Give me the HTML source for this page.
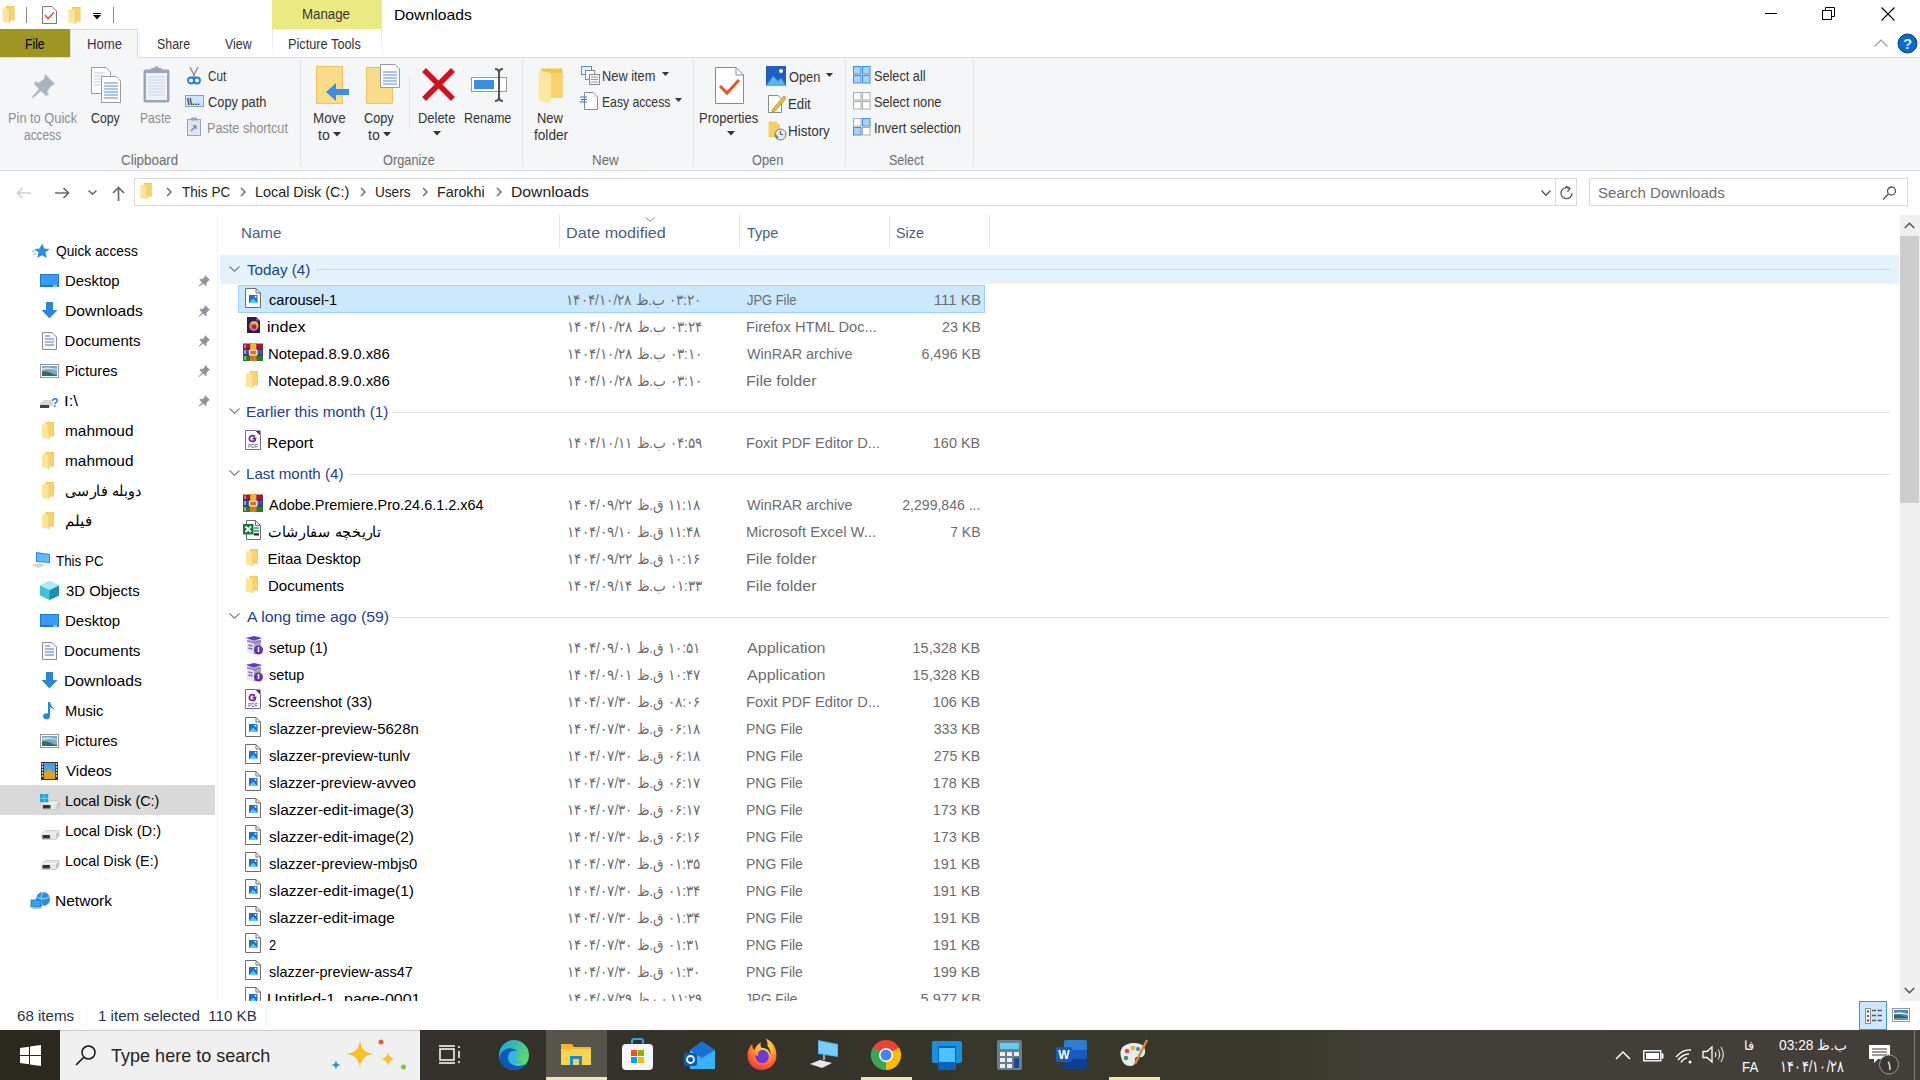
<!DOCTYPE html><html><head><meta charset="utf-8"><style>
html,body{margin:0;padding:0;width:1920px;height:1080px;overflow:hidden;background:#fff;}
body{position:relative;font-family:"Liberation Sans", sans-serif;}
.t{position:absolute;white-space:nowrap;}
.r{position:absolute;}
.s{position:absolute;overflow:visible;}
</style></head><body>
<svg class="s" style="left:2px;top:6px" width="13" height="17" viewBox="0 0 12 17"><path d="M3.5 0 H12 V14.5 H3.5 Z" fill="#eec14f"/><path d="M4 0.5 H11.5 V14 H4 Z" fill="#f7d36c"/><path d="M0 2 L7 3.2 V17 L0 15.6 Z" fill="#fde49a"/><path d="M7 3.2 V17" stroke="#f0c85c" stroke-width=".8"/></svg>
<div class="r" style="left:26px;top:7px;width:1px;height:16px;background:#8a8a8a;"></div>
<svg class="s" style="left:42px;top:6px" width="15" height="18" viewBox="0 0 15 18"><path d="M0.5 0.5 H10 L14.5 5 V17.5 H0.5 Z" fill="#f7f9fb" stroke="#7a7a7a"/><path d="M3 9 L6 12.5 L12 6.5" fill="none" stroke="#e0572a" stroke-width="1.6"/></svg>
<svg class="s" style="left:68px;top:7px" width="13" height="17" viewBox="0 0 12 17"><path d="M3.5 0 H12 V14.5 H3.5 Z" fill="#eec14f"/><path d="M4 0.5 H11.5 V14 H4 Z" fill="#f7d36c"/><path d="M0 2 L7 3.2 V17 L0 15.6 Z" fill="#fde49a"/><path d="M7 3.2 V17" stroke="#f0c85c" stroke-width=".8"/></svg>
<div class="r" style="left:93px;top:13px;width:8px;height:1.3px;background:#000;"></div>
<svg class="s" style="left:93px;top:15px" width="8" height="5" viewBox="0 0 8 5"><path d="M0 0 H8 L4 4.5 Z" fill="#000"/></svg>
<div class="r" style="left:113px;top:7px;width:1px;height:16px;background:#8a8a8a;"></div>
<div class="r" style="left:272px;top:0px;width:110px;height:29px;background:#eaea80;"></div>
<div class="t" id="ke1c3384535" style="left:302.25px;top:5.5px;font-size:14px;line-height:16px;color:#333;transform:scaleX(0.9460);transform-origin:left center;">Manage</div>
<div class="t" id="k9333cf0b65" style="left:394.45px;top:7.0px;font-size:15px;line-height:16px;color:#000;transform:scaleX(1.0493);transform-origin:left center;">Downloads</div>
<div class="r" style="left:1765px;top:13px;width:12px;height:1px;background:#000;"></div>
<svg class="s" style="left:1822px;top:7px" width="14" height="14" viewBox="0 0 14 14"><rect x="0.5" y="3.5" width="9" height="9" fill="none" stroke="#000"/><path d="M3.5 3.5 V0.5 H12.5 V9.5 H9.5" fill="none" stroke="#000"/></svg>
<svg class="s" style="left:1881px;top:7px" width="14" height="14" viewBox="0 0 14 14"><path d="M0.5 0.5 L13.5 13.5 M13.5 0.5 L0.5 13.5" stroke="#000" stroke-width="1.1"/></svg>
<div class="r" style="left:0px;top:29px;width:70px;height:28px;background:#9d9623;"></div>
<div class="t" id="k8fe68fe184" style="left:24.63px;top:35.5px;font-size:14px;line-height:16px;color:#000;transform:scaleX(0.8714);transform-origin:left center;">File</div>
<div class="r" style="left:70px;top:29px;width:68px;height:29px;background:#f5f6f7;border:1px solid #dadbdc;border-bottom:none;box-sizing:border-box;"></div>
<div class="t" id="k42819242b9" style="left:86.56px;top:35.5px;font-size:14px;line-height:16px;color:#333a4d;transform:scaleX(0.9417);transform-origin:left center;">Home</div>
<div class="t" id="k371e8a2ec9" style="left:156.51px;top:35.5px;font-size:14px;line-height:16px;color:#333;transform:scaleX(0.8861);transform-origin:left center;">Share</div>
<div class="t" id="kcfe4333309" style="left:225.3px;top:35.5px;font-size:14px;line-height:16px;color:#333;transform:scaleX(0.8833);transform-origin:left center;">View</div>
<div class="r" style="left:272px;top:29px;width:1px;height:28px;background:linear-gradient(#e0e0e0,#fff);"></div>
<div class="r" style="left:381px;top:29px;width:1px;height:28px;background:linear-gradient(#e0e0e0,#fff);"></div>
<div class="t" id="kbbd512cb06" style="left:288.49px;top:35.5px;font-size:14px;line-height:16px;color:#333;transform:scaleX(0.9113);transform-origin:left center;">Picture Tools</div>
<svg class="s" style="left:1874px;top:39px" width="14" height="8" viewBox="0 0 14 8"><path d="M0.5 7.5 L7 1 L13.5 7.5" fill="none" stroke="#9a9a9a" stroke-width="1.2"/></svg>
<svg class="s" style="left:1897px;top:33px" width="21" height="21" viewBox="0 0 21 21"><circle cx="10.5" cy="10.5" r="9.5" fill="#0b6acb" stroke="#093c7c" stroke-width="1"/><text x="10.5" y="16" font-size="15" font-weight="bold" fill="#c8f0ff" text-anchor="middle" font-family="Liberation Sans">?</text></svg>
<div class="r" style="left:0px;top:57px;width:1920px;height:114px;background:#f5f6f7;"></div>
<div class="r" style="left:0px;top:57px;width:70px;height:1px;background:#dadbdc;"></div>
<div class="r" style="left:138px;top:57px;width:1782px;height:1px;background:#dadbdc;"></div>
<div class="r" style="left:0px;top:170px;width:1920px;height:1px;background:#dadbdc;"></div>
<div class="r" style="left:300px;top:60px;width:1px;height:106px;background:#e2e3e4;"></div>
<div class="r" style="left:522px;top:60px;width:1px;height:106px;background:#e2e3e4;"></div>
<div class="r" style="left:693px;top:60px;width:1px;height:106px;background:#e2e3e4;"></div>
<div class="r" style="left:845px;top:60px;width:1px;height:106px;background:#e2e3e4;"></div>
<div class="r" style="left:973px;top:60px;width:1px;height:106px;background:#e2e3e4;"></div>
<div class="r" style="left:409px;top:75px;width:1px;height:54px;background:#e2e3e4;"></div>
<svg class="s" style="left:31px;top:72px" width="26" height="26" viewBox="0 0 13 13"><path d="M7 1 L12 6 L10 7 L8 10 L9 11 L7.5 12 L5 9.5 L1 13 L0.5 12.5 L4 8.5 L1.5 6 L2.5 4.5 L3.5 5.5 L6.5 3.5 Z" fill="#a9b4c3"/></svg>
<svg class="s" style="left:91px;top:67px" width="30" height="36" viewBox="0 0 30 36"><path d="M0.5 0.5 H15 L19.5 5 V26.5 H0.5 Z" fill="#fff" stroke="#9a9a9a"/><path d="M3 6 H14 M3 9 H16 M3 12 H16 M3 15 H16 M3 18 H16" stroke="#c5cfdc"/><path d="M10.5 9.5 H25 L29.5 14 V35.5 H10.5 Z" fill="#fff" stroke="#9a9a9a"/><path d="M13 16 H27 M13 19 H27 M13 22 H27 M13 25 H27 M13 28 H27 M13 31 H27" stroke="#4a8ed6"/></svg>
<svg class="s" style="left:143px;top:66px" width="27" height="37" viewBox="0 0 27 37"><rect x="0.5" y="3.5" width="26" height="33" rx="2" fill="#9aa5b8"/><rect x="3" y="7" width="21" height="27" fill="#eef1f6"/><path d="M5 11 H22 M5 14 H22 M5 17 H22 M5 20 H22 M5 23 H22 M5 26 H22 M5 29 H22" stroke="#d0d6e0"/><rect x="8" y="2" width="11" height="5" rx="1" fill="#9aa5b8"/><circle cx="13.5" cy="2" r="2" fill="#9aa5b8"/></svg>
<div class="t" id="kac4604ff54" style="left:8.49px;top:109.5px;font-size:14px;line-height:16px;color:#8d8d8d;transform:scaleX(0.9147);transform-origin:left center;">Pin to Quick</div>
<div class="t" id="k2690beb3b5" style="left:24.2px;top:126.5px;font-size:14px;line-height:16px;color:#8d8d8d;transform:scaleX(0.8523);transform-origin:left center;">access</div>
<div class="t" id="kb3a76b7572" style="left:91.0px;top:109.5px;font-size:14px;line-height:16px;color:#333;transform:scaleX(0.8788);transform-origin:left center;">Copy</div>
<div class="t" id="k5547e81e67" style="left:139.63px;top:109.5px;font-size:14px;line-height:16px;color:#8d8d8d;transform:scaleX(0.8676);transform-origin:left center;">Paste</div>
<svg class="s" style="left:187px;top:66px" width="14" height="19" viewBox="0 0 14 19"><path d="M3 1 L8 11 M11 1 L6 11" stroke="#8a8a8a" stroke-width="1.3"/><circle cx="4" cy="14.5" r="3" fill="none" stroke="#1a7fd4" stroke-width="1.8"/><circle cx="10" cy="14.5" r="3" fill="none" stroke="#1a7fd4" stroke-width="1.8"/></svg>
<div class="t" id="kb93fb93996" style="left:207.6px;top:67.5px;font-size:14px;line-height:16px;color:#333;transform:scaleX(0.8318);transform-origin:left center;">Cut</div>
<svg class="s" style="left:185px;top:95px" width="19" height="13" viewBox="0 0 19 13"><rect x="0.5" y="0.5" width="18" height="11" fill="#cde6fa" stroke="#6fa8dc"/><text x="2" y="9.5" font-size="9" font-weight="bold" fill="#222" font-family="Liberation Sans">\\...</text></svg>
<div class="t" id="k654f10a014" style="left:207.6px;top:93.5px;font-size:14px;line-height:16px;color:#333;transform:scaleX(0.9156);transform-origin:left center;">Copy path</div>
<svg class="s" style="left:187px;top:117px" width="15" height="19" viewBox="0 0 15 19"><rect x="0.5" y="2.5" width="13" height="16" fill="#dfe5ee" stroke="#9aa5b8"/><rect x="4" y="0.5" width="6" height="3" fill="#9aa5b8"/><path d="M4 14 L9 9 M6 9 H9 V12" stroke="#6a90c0" stroke-width="1.4" fill="none"/></svg>
<div class="t" id="kee9a45eb71" style="left:206.7px;top:119.5px;font-size:14px;line-height:16px;color:#8d8d8d;transform:scaleX(0.9044);transform-origin:left center;">Paste shortcut</div>
<div class="t" id="k705d8341e9" style="left:121.4px;top:151.5px;font-size:14px;line-height:16px;color:#6d6d6d;transform:scaleX(0.9550);transform-origin:left center;">Clipboard</div>
<svg class="s" style="left:316px;top:66px" width="34" height="38" viewBox="0 0 34 38"><path d="M0.5 0.5 H26.5 V37.5 H0.5 Z" fill="#f9dc8a" stroke="#e8c35e"/><path d="M33 23 H20 V17 L10 26 L20 35 V29 H33 Z" fill="#3c8fe0"/></svg>
<svg class="s" style="left:366px;top:64px" width="35" height="40" viewBox="0 0 35 40"><path d="M0.5 3.5 H26.5 V39.5 H0.5 Z" fill="#f9dc8a" stroke="#e8c35e"/><path d="M14.5 0.5 H29 L33.5 5 V23.5 H14.5 Z" fill="#fff" stroke="#9a9a9a"/><path d="M17 8 H31 M17 11 H31 M17 14 H31 M17 17 H31 M17 20 H31" stroke="#4a8ed6"/></svg>
<div class="t" id="k88aaeec71c" style="left:312.55px;top:109.5px;font-size:14px;line-height:16px;color:#333;transform:scaleX(0.9545);transform-origin:left center;">Move</div>
<div class="t" id="kad62a74085" style="left:318px;top:126.5px;font-size:14px;line-height:16px;color:#333;">to</div>
<svg class="s" style="left:333px;top:132px" width="8" height="5" viewBox="0 0 8 5"><path d="M0 0 H8 L4 4.5 Z" fill="#333"/></svg>
<div class="t" id="k0a5f998114" style="left:364.0px;top:109.5px;font-size:14px;line-height:16px;color:#333;transform:scaleX(0.9091);transform-origin:left center;">Copy</div>
<div class="t" id="kc221117f5c" style="left:368px;top:126.5px;font-size:14px;line-height:16px;color:#333;">to</div>
<svg class="s" style="left:383px;top:132px" width="8" height="5" viewBox="0 0 8 5"><path d="M0 0 H8 L4 4.5 Z" fill="#333"/></svg>
<svg class="s" style="left:423px;top:69px" width="31" height="31" viewBox="0 0 31 31"><path d="M3 3 L28 28 M28 3 L3 28" stroke="#d4101e" stroke-width="5.5" stroke-linecap="square"/></svg>
<div class="t" id="k14ca329ab1" style="left:418.08px;top:109.5px;font-size:14px;line-height:16px;color:#333;transform:scaleX(0.9231);transform-origin:left center;">Delete</div>
<svg class="s" style="left:433px;top:131px" width="8" height="5" viewBox="0 0 8 5"><path d="M0 0 H8 L4 4.5 Z" fill="#333"/></svg>
<svg class="s" style="left:471px;top:68px" width="37" height="34" viewBox="0 0 37 34"><rect x="0.5" y="9.5" width="35" height="14" fill="#fff" stroke="#9a9a9a"/><rect x="3" y="12" width="20" height="9" fill="#3b8fe3"/><path d="M24 1 Q28 1 28 5 V29 Q28 33 24 33 M32 1 Q28 1 28 5 M32 33 Q28 33 28 29" fill="none" stroke="#555" stroke-width="2"/></svg>
<div class="t" id="kce5debf62d" style="left:464.11px;top:109.5px;font-size:14px;line-height:16px;color:#333;transform:scaleX(0.8942);transform-origin:left center;">Rename</div>
<div class="t" id="k42b899a368" style="left:383.0px;top:151.5px;font-size:14px;line-height:16px;color:#6d6d6d;transform:scaleX(0.9123);transform-origin:left center;">Organize</div>
<svg class="s" style="left:538px;top:68px" width="25" height="36" viewBox="0 0 25 36"><path d="M3 0.5 H24.5 V30 H3 Z" fill="#f0c44c"/><path d="M0.5 2 L13 5 V35.5 L0.5 32.5 Z" fill="#fde7a2"/><path d="M13 5 H24.5 V30 H13 Z" fill="#f8d26a"/></svg>
<div class="t" id="k4eea5013cf" style="left:537.07px;top:109.5px;font-size:14px;line-height:16px;color:#333;transform:scaleX(0.9259);transform-origin:left center;">New</div>
<div class="t" id="k9134a0222e" style="left:533.8px;top:126.5px;font-size:14px;line-height:16px;color:#333;transform:scaleX(0.9722);transform-origin:left center;">folder</div>
<svg class="s" style="left:581px;top:66px" width="19" height="19" viewBox="0 0 19 19"><rect x="0.5" y="0.5" width="10" height="8" fill="#e8f2fb" stroke="#5a8fc8"/><rect x="4.5" y="4.5" width="9" height="9" fill="#fff" stroke="#8a8a8a"/><rect x="8.5" y="8.5" width="10" height="10" fill="#f4f4f8" stroke="#8a8a8a"/><path d="M10 11 H17 M10 13.5 H17 M10 16 H17" stroke="#b08ab8"/></svg>
<div class="t" id="k0bdb036ecd" style="left:602.08px;top:67.5px;font-size:14px;line-height:16px;color:#333;transform:scaleX(0.9153);transform-origin:left center;">New item</div>
<svg class="s" style="left:662px;top:72px" width="7" height="4" viewBox="0 0 7 4"><path d="M0 0 H7 L3.5 4 Z" fill="#333"/></svg>
<svg class="s" style="left:580px;top:92px" width="18" height="18" viewBox="0 0 18 18"><path d="M4.5 0.5 H13 L17.5 5 V17.5 H4.5 Z" fill="#fff" stroke="#8a8a8a"/><path d="M0 5 H7 M1 7.5 H7 M0 10 H7" stroke="#2a6fc0" stroke-width="1.2"/></svg>
<div class="t" id="k48c3096248" style="left:602.13px;top:93.5px;font-size:14px;line-height:16px;color:#333;transform:scaleX(0.8692);transform-origin:left center;">Easy access</div>
<svg class="s" style="left:675px;top:98px" width="7" height="4" viewBox="0 0 7 4"><path d="M0 0 H7 L3.5 4 Z" fill="#333"/></svg>
<div class="t" id="k6ccdc2c01c" style="left:592.04px;top:151.5px;font-size:14px;line-height:16px;color:#6d6d6d;transform:scaleX(0.9556);transform-origin:left center;">New</div>
<svg class="s" style="left:715px;top:67px" width="29" height="37" viewBox="0 0 29 37"><path d="M0.5 0.5 H21 L28.5 8 V36.5 H0.5 Z" fill="#fff" stroke="#8a8a8a"/><path d="M21 0.5 V8 H28.5" fill="none" stroke="#8a8a8a"/><path d="M5 19 L12 26 L24 13" fill="none" stroke="#e0572a" stroke-width="3"/></svg>
<div class="t" id="ke5a9089d20" style="left:699.07px;top:109.5px;font-size:14px;line-height:16px;color:#333;transform:scaleX(0.9281);transform-origin:left center;">Properties</div>
<svg class="s" style="left:727px;top:131px" width="8" height="5" viewBox="0 0 8 5"><path d="M0 0 H8 L4 4.5 Z" fill="#333"/></svg>
<svg class="s" style="left:766px;top:66px" width="20" height="20" viewBox="0 0 20 20"><rect x="0" y="0" width="20" height="20" fill="#1f5fbf"/><path d="M0 20 L7 10 L12 15 L15 12 L20 20 Z" fill="#54b4f0"/><circle cx="15" cy="5" r="2" fill="#fff"/></svg>
<div class="t" id="k4c3152ed04" style="left:789.0px;top:68.5px;font-size:14px;line-height:16px;color:#333;transform:scaleX(0.9118);transform-origin:left center;">Open</div>
<svg class="s" style="left:826px;top:73px" width="7" height="4" viewBox="0 0 7 4"><path d="M0 0 H7 L3.5 4 Z" fill="#333"/></svg>
<svg class="s" style="left:768px;top:93px" width="18" height="20" viewBox="0 0 18 20"><path d="M0.5 2.5 H10 L13.5 6 V19.5 H0.5 Z" fill="#fff" stroke="#8a8a8a"/><path d="M5 16 L16 3 L18 5 L7 18 L4 19 Z" fill="#f2c12e" stroke="#a07810" stroke-width=".7"/></svg>
<div class="t" id="kb9295ed554" style="left:788.06px;top:95.5px;font-size:14px;line-height:16px;color:#333;transform:scaleX(0.9435);transform-origin:left center;">Edit</div>
<svg class="s" style="left:768px;top:121px" width="19" height="20" viewBox="0 0 19 20"><path d="M0.5 0.5 H8 L10 3 H12 V16 H0.5 Z" fill="#f6cf62"/><circle cx="12.5" cy="13.5" r="5.5" fill="#e8e8e8" stroke="#777"/><path d="M12.5 10 V13.5 H15" stroke="#555" fill="none"/><path d="M7 14 L10 17" stroke="#2aa84a" stroke-width="2"/></svg>
<div class="t" id="k70b6361f41" style="left:788.04px;top:122.5px;font-size:14px;line-height:16px;color:#333;transform:scaleX(0.9605);transform-origin:left center;">History</div>
<div class="t" id="ke07621fb69" style="left:751.6px;top:151.5px;font-size:14px;line-height:16px;color:#6d6d6d;transform:scaleX(0.9118);transform-origin:left center;">Open</div>
<svg class="s" style="left:853px;top:66px" width="18" height="18" viewBox="0 0 18 18"><rect x="0.5" y="0.5" width="7.5" height="7.5" fill="#a9d2f5" stroke="#3c8fe0"/><rect x="9.5" y="0.5" width="7.5" height="7.5" fill="#a9d2f5" stroke="#3c8fe0"/><rect x="0.5" y="9.5" width="7.5" height="7.5" fill="#a9d2f5" stroke="#3c8fe0"/><rect x="9.5" y="9.5" width="7.5" height="7.5" fill="#a9d2f5" stroke="#3c8fe0"/></svg>
<div class="t" id="kdd23c667a3" style="left:874.09px;top:67.5px;font-size:14px;line-height:16px;color:#333;transform:scaleX(0.9071);transform-origin:left center;">Select all</div>
<svg class="s" style="left:853px;top:92px" width="18" height="18" viewBox="0 0 18 18"><rect x="0.5" y="0.5" width="7.5" height="7.5" fill="#fff" stroke="#aaa"/><rect x="9.5" y="0.5" width="7.5" height="7.5" fill="#fff" stroke="#aaa"/><rect x="0.5" y="9.5" width="7.5" height="7.5" fill="#fff" stroke="#aaa"/><rect x="9.5" y="9.5" width="7.5" height="7.5" fill="#fff" stroke="#aaa"/></svg>
<div class="t" id="k11d95b1da8" style="left:874.09px;top:93.5px;font-size:14px;line-height:16px;color:#333;transform:scaleX(0.9110);transform-origin:left center;">Select none</div>
<svg class="s" style="left:853px;top:118px" width="18" height="18" viewBox="0 0 18 18"><rect x="0.5" y="0.5" width="7.5" height="7.5" fill="#fff" stroke="#aaa"/><rect x="9.5" y="0.5" width="7.5" height="7.5" fill="#a9d2f5" stroke="#3c8fe0"/><rect x="0.5" y="9.5" width="7.5" height="7.5" fill="#a9d2f5" stroke="#3c8fe0"/><rect x="9.5" y="9.5" width="7.5" height="7.5" fill="#fff" stroke="#aaa"/></svg>
<div class="t" id="k8aea4aa72b" style="left:874.08px;top:119.5px;font-size:14px;line-height:16px;color:#333;transform:scaleX(0.9234);transform-origin:left center;">Invert selection</div>
<div class="t" id="kb5f30de877" style="left:889.11px;top:151.5px;font-size:14px;line-height:16px;color:#6d6d6d;transform:scaleX(0.8947);transform-origin:left center;">Select</div>
<svg class="s" style="left:16px;top:187px" width="16" height="12" viewBox="0 0 16 12"><path d="M15 6 H1.5 M6.5 1 L1.5 6 L6.5 11" fill="none" stroke="#d0d0d0" stroke-width="1.6"/></svg>
<svg class="s" style="left:54px;top:187px" width="16" height="12" viewBox="0 0 16 12"><path d="M1 6 H14.5 M9.5 1 L14.5 6 L9.5 11" fill="none" stroke="#6a6a6a" stroke-width="1.7"/></svg>
<svg class="s" style="left:88px;top:190px" width="9" height="5" viewBox="0 0 9 5"><path d="M0.5 0.5 L4.5 4.2 L8.5 0.5" fill="none" stroke="#6d6d6d" stroke-width="1.6"/></svg>
<svg class="s" style="left:112px;top:186px" width="13" height="15" viewBox="0 0 13 15"><path d="M6.5 15 V1.5 M1 7 L6.5 1.5 L12 7" fill="none" stroke="#6a6a6a" stroke-width="1.7"/></svg>
<div class="r" style="left:134px;top:178px;width:1443px;height:28px;background:#fff;border:1px solid #d9d9d9;box-sizing:border-box;"></div>
<div class="r" style="left:1555px;top:179px;width:1px;height:26px;background:#d9d9d9;"></div>
<svg class="s" style="left:140px;top:183px" width="12" height="16" viewBox="0 0 12 17"><path d="M3.5 0 H12 V14.5 H3.5 Z" fill="#eec14f"/><path d="M4 0.5 H11.5 V14 H4 Z" fill="#f7d36c"/><path d="M0 2 L7 3.2 V17 L0 15.6 Z" fill="#fde49a"/><path d="M7 3.2 V17" stroke="#f0c85c" stroke-width=".8"/></svg>
<svg class="s" style="left:166px;top:187px" width="6" height="10" viewBox="0 0 6 10"><path d="M1 1 L5 5 L1 9" fill="none" stroke="#6d6d6d" stroke-width="1.5"/></svg>
<svg class="s" style="left:240px;top:187px" width="6" height="10" viewBox="0 0 6 10"><path d="M1 1 L5 5 L1 9" fill="none" stroke="#6d6d6d" stroke-width="1.5"/></svg>
<svg class="s" style="left:360px;top:187px" width="6" height="10" viewBox="0 0 6 10"><path d="M1 1 L5 5 L1 9" fill="none" stroke="#6d6d6d" stroke-width="1.5"/></svg>
<svg class="s" style="left:422px;top:187px" width="6" height="10" viewBox="0 0 6 10"><path d="M1 1 L5 5 L1 9" fill="none" stroke="#6d6d6d" stroke-width="1.5"/></svg>
<svg class="s" style="left:496px;top:187px" width="6" height="10" viewBox="0 0 6 10"><path d="M1 1 L5 5 L1 9" fill="none" stroke="#6d6d6d" stroke-width="1.5"/></svg>
<div class="t" id="kbdca01d6d1" style="left:182.3px;top:184.0px;font-size:15px;line-height:16px;color:#222;transform:scaleX(0.9038);transform-origin:left center;">This PC</div>
<div class="t" id="k1adaee9e92" style="left:255.34px;top:184.0px;font-size:15px;line-height:16px;color:#222;transform:scaleX(0.9583);transform-origin:left center;">Local Disk (C:)</div>
<div class="t" id="k09275f623c" style="left:375.39px;top:184.0px;font-size:15px;line-height:16px;color:#222;transform:scaleX(0.9053);transform-origin:left center;">Users</div>
<div class="t" id="k7c676f3ad0" style="left:437.35px;top:184.0px;font-size:15px;line-height:16px;color:#222;transform:scaleX(0.9521);transform-origin:left center;">Farokhi</div>
<div class="t" id="k5b4f0cbd45" style="left:511.25px;top:184.0px;font-size:15px;line-height:16px;color:#222;transform:scaleX(1.0479);transform-origin:left center;">Downloads</div>
<svg class="s" style="left:1541px;top:190px" width="10" height="6" viewBox="0 0 10 6"><path d="M0.5 0.5 L5.0 5.2 L9.5 0.5" fill="none" stroke="#555" stroke-width="1.3"/></svg>
<svg class="s" style="left:1559px;top:185px" width="16" height="16" viewBox="0 0 16 16"><path d="M13 8 A5.5 5.5 0 1 1 10 3.2" fill="none" stroke="#555" stroke-width="1.3"/><path d="M6.5 1 L11 3.3 L8.5 7" fill="none" stroke="#555" stroke-width="1.3"/></svg>
<div class="r" style="left:1589px;top:178px;width:319px;height:28px;background:#fff;border:1px solid #d9d9d9;box-sizing:border-box;"></div>
<div class="t" id="k22b26d25c6" style="left:1597.99px;top:184.5px;font-size:15px;line-height:16px;color:#6d6d6d;transform:scaleX(1.0066);transform-origin:left center;">Search Downloads</div>
<svg class="s" style="left:1882px;top:186px" width="15" height="14" viewBox="0 0 15 14"><circle cx="9.5" cy="5" r="4" fill="none" stroke="#555" stroke-width="1.3"/><path d="M6.5 8 L1 13.5" stroke="#555" stroke-width="1.5"/></svg>
<div class="r" style="left:217px;top:215px;width:1px;height:785px;background:#f2f2f2;"></div>
<svg class="s" style="left:32px;top:243px" width="18" height="16" viewBox="0 0 18 16"><path d="M10 0.5 L12.3 5.5 L17.5 6 L13.5 9.6 L14.8 15 L10 12.2 L5.2 15 L6.5 9.6 L2.5 6 L7.7 5.5 Z" fill="#2b8fe0"/><path d="M0 8 H4 M1 11 H4.5" stroke="#7ab8ec" stroke-width="1"/></svg>
<div class="t" id="kaf05c764b4" style="left:55.5px;top:243.0px;font-size:15px;line-height:16px;color:#000;transform:scaleX(0.9167);transform-origin:left center;">Quick access</div>
<svg class="s" style="left:40px;top:274px" width="19" height="14" viewBox="0 0 19 14"><rect x="0" y="0" width="19" height="13" fill="#1e7ad8"/><rect x="1" y="1" width="17" height="10" fill="#3b9bf0"/><rect x="13" y="11.5" width="4" height="1" fill="#fff"/></svg>
<div class="t" id="kac0e4f53c8" style="left:64.61px;top:273.0px;font-size:15px;line-height:16px;color:#000;transform:scaleX(0.9926);transform-origin:left center;">Desktop</div>
<svg class="s" style="left:198px;top:274px" width="13" height="13" viewBox="0 0 13 13"><path d="M7 1 L12 6 L10 7 L8 10 L9 11 L7.5 12 L5 9.5 L1 13 L0.5 12.5 L4 8.5 L1.5 6 L2.5 4.5 L3.5 5.5 L6.5 3.5 Z" fill="#8e9499"/></svg>
<svg class="s" style="left:41px;top:302px" width="17" height="17" viewBox="0 0 17 17"><path d="M5 0 H12 V8 H16.5 L8.5 16.5 L0.5 8 H5 Z" fill="#2b85d8"/></svg>
<div class="t" id="k040f076cac" style="left:64.55px;top:303.0px;font-size:15px;line-height:16px;color:#000;transform:scaleX(1.0479);transform-origin:left center;">Downloads</div>
<svg class="s" style="left:198px;top:304px" width="13" height="13" viewBox="0 0 13 13"><path d="M7 1 L12 6 L10 7 L8 10 L9 11 L7.5 12 L5 9.5 L1 13 L0.5 12.5 L4 8.5 L1.5 6 L2.5 4.5 L3.5 5.5 L6.5 3.5 Z" fill="#8e9499"/></svg>
<svg class="s" style="left:42px;top:332px" width="15" height="18" viewBox="0 0 15 18"><path d="M0.5 0.5 H10 L14.5 5 V17.5 H0.5 Z" fill="#f8f8f8" stroke="#8a8a8a"/><path d="M3 4 H8 M3 7 H12 M3 10 H12 M3 13 H12" stroke="#4a7fc0"/></svg>
<div class="t" id="kce60743c2c" style="left:64.6px;top:333.0px;font-size:15px;line-height:16px;color:#000;transform:scaleX(1.0000);transform-origin:left center;">Documents</div>
<svg class="s" style="left:198px;top:334px" width="13" height="13" viewBox="0 0 13 13"><path d="M7 1 L12 6 L10 7 L8 10 L9 11 L7.5 12 L5 9.5 L1 13 L0.5 12.5 L4 8.5 L1.5 6 L2.5 4.5 L3.5 5.5 L6.5 3.5 Z" fill="#8e9499"/></svg>
<svg class="s" style="left:40px;top:364px" width="19" height="14" viewBox="0 0 19 14"><rect x="0.5" y="0.5" width="18" height="13" fill="#fff" stroke="#9a9a9a"/><rect x="2" y="2" width="15" height="10" fill="#7aa8d0"/><path d="M2 4 Q9 2.5 17 5 V6 Q9 4 2 6 Z" fill="#d8e8f4"/><path d="M2 12 V7.5 Q7 6.5 11 9 T17 10.5 V12 Z" fill="#3a6a5a"/></svg>
<div class="t" id="ke55560c003" style="left:64.63px;top:363.0px;font-size:15px;line-height:16px;color:#000;transform:scaleX(0.9692);transform-origin:left center;">Pictures</div>
<svg class="s" style="left:198px;top:364px" width="13" height="13" viewBox="0 0 13 13"><path d="M7 1 L12 6 L10 7 L8 10 L9 11 L7.5 12 L5 9.5 L1 13 L0.5 12.5 L4 8.5 L1.5 6 L2.5 4.5 L3.5 5.5 L6.5 3.5 Z" fill="#8e9499"/></svg>
<svg class="s" style="left:40px;top:394px" width="20" height="15" viewBox="0 0 20 15"><path d="M0 9 L4 6 H13 V11 L9 14 H0 Z" fill="#d5d5d5"/><rect x="0" y="11" width="9" height="3" fill="#444"/><text x="15" y="13" font-size="12" font-weight="bold" fill="#2b7fd4" text-anchor="middle" font-family="Liberation Sans">?</text></svg>
<div class="t" id="kf578783d57" style="left:64.48px;top:393.0px;font-size:15px;line-height:16px;color:#000;transform:scaleX(1.1182);transform-origin:left center;">I:\</div>
<svg class="s" style="left:198px;top:394px" width="13" height="13" viewBox="0 0 13 13"><path d="M7 1 L12 6 L10 7 L8 10 L9 11 L7.5 12 L5 9.5 L1 13 L0.5 12.5 L4 8.5 L1.5 6 L2.5 4.5 L3.5 5.5 L6.5 3.5 Z" fill="#8e9499"/></svg>
<svg class="s" style="left:42px;top:422px" width="12" height="17" viewBox="0 0 12 17"><path d="M3.5 0 H12 V14.5 H3.5 Z" fill="#eec14f"/><path d="M4 0.5 H11.5 V14 H4 Z" fill="#f7d36c"/><path d="M0 2 L7 3.2 V17 L0 15.6 Z" fill="#fde49a"/><path d="M7 3.2 V17" stroke="#f0c85c" stroke-width=".8"/></svg>
<div class="t" id="kd5b66b2ef0" style="left:64.57px;top:423.0px;font-size:15px;line-height:16px;color:#000;transform:scaleX(1.0262);transform-origin:left center;">mahmoud</div>
<svg class="s" style="left:42px;top:452px" width="12" height="17" viewBox="0 0 12 17"><path d="M3.5 0 H12 V14.5 H3.5 Z" fill="#eec14f"/><path d="M4 0.5 H11.5 V14 H4 Z" fill="#f7d36c"/><path d="M0 2 L7 3.2 V17 L0 15.6 Z" fill="#fde49a"/><path d="M7 3.2 V17" stroke="#f0c85c" stroke-width=".8"/></svg>
<div class="t" id="ka094996ed9" style="left:64.57px;top:453.0px;font-size:15px;line-height:16px;color:#000;transform:scaleX(1.0262);transform-origin:left center;">mahmoud</div>
<svg class="s" style="left:42px;top:482px" width="12" height="17" viewBox="0 0 12 17"><path d="M3.5 0 H12 V14.5 H3.5 Z" fill="#eec14f"/><path d="M4 0.5 H11.5 V14 H4 Z" fill="#f7d36c"/><path d="M0 2 L7 3.2 V17 L0 15.6 Z" fill="#fde49a"/><path d="M7 3.2 V17" stroke="#f0c85c" stroke-width=".8"/></svg>
<div class="t" id="ke51fcf1f1d" style="left:64.65px;top:483.0px;font-size:15px;line-height:16px;color:#000;transform:scaleX(0.9526);transform-origin:left center;"><span dir="rtl">دوبله فارسی</span></div>
<svg class="s" style="left:42px;top:512px" width="12" height="17" viewBox="0 0 12 17"><path d="M3.5 0 H12 V14.5 H3.5 Z" fill="#eec14f"/><path d="M4 0.5 H11.5 V14 H4 Z" fill="#f7d36c"/><path d="M0 2 L7 3.2 V17 L0 15.6 Z" fill="#fde49a"/><path d="M7 3.2 V17" stroke="#f0c85c" stroke-width=".8"/></svg>
<div class="t" id="k4a039a8b0d" style="left:64.58px;top:513.0px;font-size:15px;line-height:16px;color:#000;transform:scaleX(1.0160);transform-origin:left center;"><span dir="rtl">فیلم</span></div>
<svg class="s" style="left:31px;top:552px" width="20" height="17" viewBox="0 0 20 17"><path d="M5 0 L19 2 V11 L5 10 Z" fill="#2b8fe0"/><path d="M6 1.5 L18 3 V10 L6 9 Z" fill="#64b8f5"/><path d="M0 13 L7 11 L15 13 L8 16 Z" fill="#d5d5d5"/></svg>
<div class="t" id="k6e1b5e44b1" style="left:55.6px;top:553.0px;font-size:15px;line-height:16px;color:#000;transform:scaleX(0.8923);transform-origin:left center;">This PC</div>
<svg class="s" style="left:40px;top:581px" width="19" height="19" viewBox="0 0 19 19"><path d="M9.5 0 L19 4.5 V14.5 L9.5 19 L0 14.5 V4.5 Z" fill="#3fc4d6"/><path d="M9.5 9 L19 4.5 V14.5 L9.5 19 Z" fill="#1a8fb0"/><path d="M0 4.5 L9.5 9 L19 4.5 L9.5 0 Z" fill="#a9ecf5"/></svg>
<div class="t" id="k5d7a2195ec" style="left:65.5px;top:583.0px;font-size:15px;line-height:16px;color:#000;transform:scaleX(0.9918);transform-origin:left center;">3D Objects</div>
<svg class="s" style="left:40px;top:614px" width="19" height="14" viewBox="0 0 19 14"><rect x="0" y="0" width="19" height="13" fill="#1e7ad8"/><rect x="1" y="1" width="17" height="10" fill="#3b9bf0"/><rect x="13" y="11.5" width="4" height="1" fill="#fff"/></svg>
<div class="t" id="k3954bf2086" style="left:64.5px;top:613.0px;font-size:15px;line-height:16px;color:#000;transform:scaleX(1.0019);transform-origin:left center;">Desktop</div>
<svg class="s" style="left:42px;top:642px" width="15" height="18" viewBox="0 0 15 18"><path d="M0.5 0.5 H10 L14.5 5 V17.5 H0.5 Z" fill="#f8f8f8" stroke="#8a8a8a"/><path d="M3 4 H8 M3 7 H12 M3 10 H12 M3 13 H12" stroke="#4a7fc0"/></svg>
<div class="t" id="kcabe1cb819" style="left:64.49px;top:643.0px;font-size:15px;line-height:16px;color:#000;transform:scaleX(1.0068);transform-origin:left center;">Documents</div>
<svg class="s" style="left:41px;top:672px" width="17" height="17" viewBox="0 0 17 17"><path d="M5 0 H12 V8 H16.5 L8.5 16.5 L0.5 8 H5 Z" fill="#2b85d8"/></svg>
<div class="t" id="kb666b25984" style="left:64.45px;top:673.0px;font-size:15px;line-height:16px;color:#000;transform:scaleX(1.0493);transform-origin:left center;">Downloads</div>
<svg class="s" style="left:43px;top:702px" width="14" height="18" viewBox="0 0 14 18"><path d="M5 0 H7 Q8 5 13 8 Q9 7 7 5 V14 A3.5 3 0 1 1 5 11.6 Z" fill="#1e88d8"/></svg>
<div class="t" id="k4170ecff67" style="left:64.52px;top:703.0px;font-size:15px;line-height:16px;color:#000;transform:scaleX(0.9789);transform-origin:left center;">Music</div>
<svg class="s" style="left:40px;top:734px" width="19" height="14" viewBox="0 0 19 14"><rect x="0.5" y="0.5" width="18" height="13" fill="#fff" stroke="#9a9a9a"/><rect x="2" y="2" width="15" height="10" fill="#7aa8d0"/><path d="M2 4 Q9 2.5 17 5 V6 Q9 4 2 6 Z" fill="#d8e8f4"/><path d="M2 12 V7.5 Q7 6.5 11 9 T17 10.5 V12 Z" fill="#3a6a5a"/></svg>
<div class="t" id="k4c13d1d94e" style="left:64.53px;top:733.0px;font-size:15px;line-height:16px;color:#000;transform:scaleX(0.9712);transform-origin:left center;">Pictures</div>
<svg class="s" style="left:41px;top:762px" width="17" height="18" viewBox="0 0 17 18"><rect x="0" y="0" width="17" height="18" fill="#333"/><rect x="3" y="1" width="11" height="16" fill="#4aa0e0"/><path d="M3 17 L3 10 L8 7 L14 11 V17 Z" fill="#e0a020"/><path d="M0.8 2 H2.2 M0.8 5 H2.2 M0.8 8 H2.2 M0.8 11 H2.2 M0.8 14 H2.2 M14.8 2 H16.2 M14.8 5 H16.2 M14.8 8 H16.2 M14.8 11 H16.2 M14.8 14 H16.2" stroke="#fff" stroke-width="1.5"/></svg>
<div class="t" id="k10298448d5" style="left:65.5px;top:763.0px;font-size:15px;line-height:16px;color:#000;transform:scaleX(1.0045);transform-origin:left center;">Videos</div>
<div class="r" style="left:0px;top:785px;width:215px;height:30px;background:#d9d9d9;"></div>
<svg class="s" style="left:39.5px;top:794px" width="21" height="16" viewBox="0 0 21 16"><g transform="translate(1.5,6)"><path d="M1 3.5 L4 0.5 H18 V6 L15 9.5 H1 Z" fill="#e6e6e6" stroke="#b0b0b0" stroke-width=".5"/><path d="M15 3.5 V9.5 L18 6 V0.5 Z" fill="#c4c4c4"/><path d="M1 3.5 H15 L18 0.5" fill="none" stroke="#fafafa" stroke-width=".8"/><rect x="1.5" y="5" width="7.5" height="3.5" fill="#333"/><rect x="8" y="7" width="1.5" height="1.2" fill="#4a9a4a"/></g><rect x="0" y="0" width="3.8" height="3.8" fill="#10a8e8"/><rect x="4.4" y="0" width="3.8" height="3.8" fill="#10a8e8"/><rect x="0" y="4.4" width="3.8" height="3.8" fill="#10a8e8"/><rect x="4.4" y="4.4" width="3.8" height="3.8" fill="#10a8e8"/></svg>
<div class="t" id="k527062e212" style="left:64.54px;top:793.0px;font-size:15px;line-height:16px;color:#000;transform:scaleX(0.9594);transform-origin:left center;">Local Disk (C:)</div>
<svg class="s" style="left:41px;top:830px" width="19" height="10" viewBox="0 0 19 10"><path d="M1 3.5 L4 0.5 H18 V6 L15 9.5 H1 Z" fill="#e6e6e6" stroke="#b0b0b0" stroke-width=".5"/><path d="M15 3.5 V9.5 L18 6 V0.5 Z" fill="#c4c4c4"/><path d="M1 3.5 H15 L18 0.5" fill="none" stroke="#fafafa" stroke-width=".8"/><rect x="1.5" y="5" width="7.5" height="3.5" fill="#333"/><rect x="8" y="7" width="1.5" height="1.2" fill="#4a9a4a"/></svg>
<div class="t" id="k55f02c72f3" style="left:64.52px;top:823.0px;font-size:15px;line-height:16px;color:#000;transform:scaleX(0.9771);transform-origin:left center;">Local Disk (D:)</div>
<svg class="s" style="left:41px;top:860px" width="19" height="10" viewBox="0 0 19 10"><path d="M1 3.5 L4 0.5 H18 V6 L15 9.5 H1 Z" fill="#e6e6e6" stroke="#b0b0b0" stroke-width=".5"/><path d="M15 3.5 V9.5 L18 6 V0.5 Z" fill="#c4c4c4"/><path d="M1 3.5 H15 L18 0.5" fill="none" stroke="#fafafa" stroke-width=".8"/><rect x="1.5" y="5" width="7.5" height="3.5" fill="#333"/><rect x="8" y="7" width="1.5" height="1.2" fill="#4a9a4a"/></svg>
<div class="t" id="k03b5966190" style="left:64.54px;top:853.0px;font-size:15px;line-height:16px;color:#000;transform:scaleX(0.9579);transform-origin:left center;">Local Disk (E:)</div>
<svg class="s" style="left:31px;top:892px" width="20" height="18" viewBox="0 0 20 18"><circle cx="12" cy="7" r="7" fill="#2b8fe0"/><path d="M6 5 Q12 9 18 5 M12 0 Q8 7 12 14" fill="none" stroke="#a6d8ff" stroke-width="1"/><rect x="0" y="8" width="10" height="7" fill="#3aa0e8" stroke="#1a6fb8" stroke-width=".8"/><rect x="2" y="15" width="8" height="2" fill="#bbb"/></svg>
<div class="t" id="k17f2fc333d" style="left:54.56px;top:893.0px;font-size:15px;line-height:16px;color:#000;transform:scaleX(1.0352);transform-origin:left center;">Network</div>
<div class="t" id="kf717c6ba5d" style="left:240.69px;top:224.5px;font-size:15px;line-height:16px;color:#4c607a;transform:scaleX(1.0077);transform-origin:left center;">Name</div>
<div class="t" id="k0ebe6f4410" style="left:566.42px;top:224.5px;font-size:15px;line-height:16px;color:#4c607a;transform:scaleX(1.0775);transform-origin:left center;">Date modified</div>
<div class="t" id="k4d4d3d7f72" style="left:747.2px;top:224.5px;font-size:15px;line-height:16px;color:#4c607a;transform:scaleX(0.9594);transform-origin:left center;">Type</div>
<div class="t" id="k26ad885aad" style="left:896.04px;top:224.5px;font-size:15px;line-height:16px;color:#4c607a;transform:scaleX(0.9571);transform-origin:left center;">Size</div>
<div class="r" style="left:559px;top:215px;width:1px;height:32px;background:#e5e5e5;"></div>
<div class="r" style="left:739px;top:215px;width:1px;height:32px;background:#e5e5e5;"></div>
<div class="r" style="left:889px;top:215px;width:1px;height:32px;background:#e5e5e5;"></div>
<div class="r" style="left:989px;top:215px;width:1px;height:32px;background:#e5e5e5;"></div>
<svg class="s" style="left:645px;top:217px" width="10" height="5" viewBox="0 0 10 5"><path d="M0.5 0.5 L5.0 4.2 L9.5 0.5" fill="none" stroke="#888" stroke-width="1"/></svg>
<div class="r" style="left:220px;top:255px;width:1679px;height:29px;background:#e5f3ff;"></div>
<svg class="s" style="left:229px;top:266px" width="11" height="6" viewBox="0 0 11 6"><path d="M0.5 0.5 L5.5 5.2 L10.5 0.5" fill="none" stroke="#6b7fa0" stroke-width="1.1"/></svg>
<div class="t" id="ke8be4a498b" style="left:246.6px;top:261.5px;font-size:15px;line-height:16px;color:#24408c;transform:scaleX(1.0117);transform-origin:left center;">Today (4)</div>
<div class="r" style="left:316px;top:269px;width:1574px;height:1px;background:#c9d9e8;"></div>
<div class="r" style="left:238px;top:285px;width:747px;height:28px;background:#cce8ff;border:1px solid #99d1ff;box-sizing:border-box;"></div>
<svg class="s" style="left:245px;top:288px" width="16" height="20" viewBox="0 0 16 20"><path d="M0.5 0.5 H11 L15.5 5 V19.5 H0.5 Z" fill="#fff" stroke="#6e6e6e"/><path d="M11 0.5 V5 H15.5" fill="none" stroke="#6e6e6e"/><rect x="4" y="7" width="8.5" height="8" fill="#1f6fc8"/><path d="M4 15 L8 10.5 L12.5 15 Z" fill="#5cc8f5"/><circle cx="10.5" cy="8.8" r="1" fill="#d8f0ff"/></svg>
<div class="t" id="k8f45c61449" style="left:268.5px;top:292.0px;font-size:15px;line-height:16px;color:#000;transform:scaleX(0.9725);transform-origin:left center;">carousel-1</div>
<div class="t" id="kDATE" style="left:565.68px;top:291.5px;font-size:15px;line-height:16px;color:#6d6d6d;transform:scaleX(0.9084);transform-origin:left center;direction:ltr;unicode-bidi:isolate;"><span style="unicode-bidi:isolate">۱۴۰۴/۱۰/۲۸</span> <span style="unicode-bidi:isolate" dir="rtl">ب.ظ</span> <span style="unicode-bidi:isolate">۰۳:۲۰</span></div>
<div class="t" id="k53c37b74e7" style="left:747.3px;top:292.0px;font-size:15px;line-height:16px;color:#6d6d6d;transform:scaleX(0.8614);transform-origin:left center;">JPG File</div>
<div class="t" id="kfe14dd90f9" style="right:939.49px;top:292.0px;font-size:15px;line-height:16px;color:#6d6d6d;transform:scaleX(1.0068);transform-origin:right center;">111 KB</div>
<svg class="s" style="left:246.5px;top:316.5px" width="13" height="16" viewBox="0 0 13 16"><path d="M0 0 H9.5 L13 3.5 V16 H0 Z" fill="#2a1c5a"/><path d="M9.5 0 L13 3.5 H9.5 Z" fill="#9a6ae0"/><circle cx="6.8" cy="9.2" r="4.8" fill="#ff6a2a"/><path d="M3 6 Q6 2.5 10.5 5 Q12 8 10 11" fill="#ffb020"/><circle cx="7.2" cy="9.6" r="2.3" fill="#6a2ac0"/></svg>
<div class="t" id="kbf18bde4ae" style="left:267.42px;top:319.0px;font-size:15px;line-height:16px;color:#000;transform:scaleX(1.0758);transform-origin:left center;">index</div>
<div class="t" style="left:567px;top:318.5px;font-size:15px;line-height:16px;color:#6d6d6d;transform:scaleX(0.9084);transform-origin:left center;direction:ltr;unicode-bidi:isolate;"><span style="unicode-bidi:isolate">۱۴۰۴/۱۰/۲۸</span> <span style="unicode-bidi:isolate" dir="rtl">ب.ظ</span> <span style="unicode-bidi:isolate">۰۳:۲۴</span></div>
<div class="t" id="k392a28db9b" style="left:746.32px;top:319.0px;font-size:15px;line-height:16px;color:#6d6d6d;transform:scaleX(0.9785);transform-origin:left center;">Firefox HTML Doc...</div>
<div class="t" id="ka0659f470c" style="right:939.55px;top:319.0px;font-size:15px;line-height:16px;color:#6d6d6d;transform:scaleX(0.9487);transform-origin:right center;">23 KB</div>
<svg class="s" style="left:243px;top:343px" width="20" height="18" viewBox="0 0 20 18"><rect x="0" y="0.5" width="20" height="5.5" fill="#a4173f"/><rect x="0" y="6" width="20" height="6" fill="#4646b0"/><rect x="0" y="12" width="20" height="6" fill="#2a7a30"/><rect x="1.5" y="1.5" width="1.2" height="3.5" fill="#f0c060"/><rect x="1.5" y="7" width="1.2" height="4" fill="#d0d0f0"/><rect x="1.5" y="13" width="1.2" height="4" fill="#d0e060"/><path d="M0 6 H20 M0 12 H20" stroke="#222" stroke-width=".6"/><rect x="7" y="0" width="6.5" height="18" fill="#d07a20"/><rect x="7.5" y="0" width="5.5" height="6" rx="1.5" fill="#f0b830"/><rect x="6.5" y="7" width="7.5" height="5" rx="1" fill="none" stroke="#fff" stroke-width="1.2"/></svg>
<div class="t" id="k1121700686" style="left:267.51px;top:346.0px;font-size:15px;line-height:16px;color:#000;transform:scaleX(0.9924);transform-origin:left center;">Notepad.8.9.0.x86</div>
<div class="t" style="left:567px;top:345.5px;font-size:15px;line-height:16px;color:#6d6d6d;transform:scaleX(0.9084);transform-origin:left center;direction:ltr;unicode-bidi:isolate;"><span style="unicode-bidi:isolate">۱۴۰۴/۱۰/۲۸</span> <span style="unicode-bidi:isolate" dir="rtl">ب.ظ</span> <span style="unicode-bidi:isolate">۰۳:۱۰</span></div>
<div class="t" id="k528f797740" style="left:747.3px;top:346.0px;font-size:15px;line-height:16px;color:#6d6d6d;transform:scaleX(0.9587);transform-origin:left center;">WinRAR archive</div>
<div class="t" id="k7b7e4d9cda" style="right:939.54px;top:346.0px;font-size:15px;line-height:16px;color:#6d6d6d;transform:scaleX(0.9576);transform-origin:right center;">6,496 KB</div>
<svg class="s" style="left:246px;top:370.5px" width="12" height="17" viewBox="0 0 12 17"><path d="M3.5 0 H12 V14.5 H3.5 Z" fill="#eec14f"/><path d="M4 0.5 H11.5 V14 H4 Z" fill="#f7d36c"/><path d="M0 2 L7 3.2 V17 L0 15.6 Z" fill="#fde49a"/><path d="M7 3.2 V17" stroke="#f0c85c" stroke-width=".8"/></svg>
<div class="t" id="kb14b787bdc" style="left:267.51px;top:373.0px;font-size:15px;line-height:16px;color:#000;transform:scaleX(0.9924);transform-origin:left center;">Notepad.8.9.0.x86</div>
<div class="t" style="left:567px;top:372.5px;font-size:15px;line-height:16px;color:#6d6d6d;transform:scaleX(0.9084);transform-origin:left center;direction:ltr;unicode-bidi:isolate;"><span style="unicode-bidi:isolate">۱۴۰۴/۱۰/۲۸</span> <span style="unicode-bidi:isolate" dir="rtl">ب.ظ</span> <span style="unicode-bidi:isolate">۰۳:۱۰</span></div>
<div class="t" id="k905035a8b6" style="left:746.23px;top:373.0px;font-size:15px;line-height:16px;color:#6d6d6d;transform:scaleX(1.0710);transform-origin:left center;">File folder</div>
<svg class="s" style="left:229px;top:408px" width="11" height="6" viewBox="0 0 11 6"><path d="M0.5 0.5 L5.5 5.2 L10.5 0.5" fill="none" stroke="#6b7fa0" stroke-width="1.1"/></svg>
<div class="t" id="k7757dde519" style="left:245.58px;top:403.5px;font-size:15px;line-height:16px;color:#24408c;transform:scaleX(1.0231);transform-origin:left center;">Earlier this month (1)</div>
<div class="r" style="left:392px;top:412px;width:1498px;height:1px;background:#e2e2e2;"></div>
<svg class="s" style="left:245px;top:430px" width="16" height="20" viewBox="0 0 16 20"><path d="M0.5 0.5 H10.5 L15.5 5.5 V19.5 H0.5 Z" fill="#fff" stroke="#7a6a8a"/><path d="M10.5 0.5 L15.5 5.5 V0.5 Z" fill="#5a2a7a"/><path d="M10 6.5 Q6 4 4.5 8 Q4 11.5 8 11.5 Q10.5 11 10.5 8.5 H7.5" fill="none" stroke="#6a2a8a" stroke-width="1.8"/><text x="8" y="17.5" font-size="5" fill="#5a3a6a" text-anchor="middle" font-family="Liberation Sans">PDF</text></svg>
<div class="t" id="k8311ba39c3" style="left:267.47px;top:435.0px;font-size:15px;line-height:16px;color:#000;transform:scaleX(1.0279);transform-origin:left center;">Report</div>
<div class="t" style="left:567px;top:434.5px;font-size:15px;line-height:16px;color:#6d6d6d;transform:scaleX(0.9084);transform-origin:left center;direction:ltr;unicode-bidi:isolate;"><span style="unicode-bidi:isolate">۱۴۰۴/۱۰/۱۱</span> <span style="unicode-bidi:isolate" dir="rtl">ب.ظ</span> <span style="unicode-bidi:isolate">۰۴:۵۹</span></div>
<div class="t" id="ka7671f5611" style="left:746.33px;top:435.0px;font-size:15px;line-height:16px;color:#6d6d6d;transform:scaleX(0.9744);transform-origin:left center;">Foxit PDF Editor D...</div>
<div class="t" id="ka46fe59ba0" style="right:939.54px;top:435.0px;font-size:15px;line-height:16px;color:#6d6d6d;transform:scaleX(0.9630);transform-origin:right center;">160 KB</div>
<svg class="s" style="left:229px;top:470px" width="11" height="6" viewBox="0 0 11 6"><path d="M0.5 0.5 L5.5 5.2 L10.5 0.5" fill="none" stroke="#6b7fa0" stroke-width="1.1"/></svg>
<div class="t" id="k9ee083a408" style="left:245.59px;top:465.5px;font-size:15px;line-height:16px;color:#24408c;transform:scaleX(1.0075);transform-origin:left center;">Last month (4)</div>
<div class="r" style="left:349px;top:474px;width:1541px;height:1px;background:#e2e2e2;"></div>
<svg class="s" style="left:243px;top:494px" width="20" height="18" viewBox="0 0 20 18"><rect x="0" y="0.5" width="20" height="5.5" fill="#a4173f"/><rect x="0" y="6" width="20" height="6" fill="#4646b0"/><rect x="0" y="12" width="20" height="6" fill="#2a7a30"/><rect x="1.5" y="1.5" width="1.2" height="3.5" fill="#f0c060"/><rect x="1.5" y="7" width="1.2" height="4" fill="#d0d0f0"/><rect x="1.5" y="13" width="1.2" height="4" fill="#d0e060"/><path d="M0 6 H20 M0 12 H20" stroke="#222" stroke-width=".6"/><rect x="7" y="0" width="6.5" height="18" fill="#d07a20"/><rect x="7.5" y="0" width="5.5" height="6" rx="1.5" fill="#f0b830"/><rect x="6.5" y="7" width="7.5" height="5" rx="1" fill="none" stroke="#fff" stroke-width="1.2"/></svg>
<div class="t" id="k3cb84ca420" style="left:268.5px;top:497.0px;font-size:15px;line-height:16px;color:#000;transform:scaleX(0.9641);transform-origin:left center;">Adobe.Premiere.Pro.24.6.1.2.x64</div>
<div class="t" style="left:567px;top:496.5px;font-size:15px;line-height:16px;color:#6d6d6d;transform:scaleX(0.9084);transform-origin:left center;direction:ltr;unicode-bidi:isolate;"><span style="unicode-bidi:isolate">۱۴۰۴/۰۹/۲۲</span> <span style="unicode-bidi:isolate" dir="rtl">ق.ظ</span> <span style="unicode-bidi:isolate">۱۱:۱۸</span></div>
<div class="t" id="k0f000323bd" style="left:747.3px;top:497.0px;font-size:15px;line-height:16px;color:#6d6d6d;transform:scaleX(0.9587);transform-origin:left center;">WinRAR archive</div>
<div class="t" id="k2460f2d7c5" style="right:939.56px;top:497.0px;font-size:15px;line-height:16px;color:#6d6d6d;transform:scaleX(0.9367);transform-origin:right center;">2,299,846 ...</div>
<svg class="s" style="left:243px;top:520px" width="18" height="20" viewBox="0 0 18 20"><path d="M3.5 0.5 H12.5 L17.5 5.5 V19.5 H3.5 Z" fill="#fff" stroke="#6e6e6e"/><path d="M12.5 0.5 V5.5 H17.5" fill="none" stroke="#6e6e6e"/><path d="M11 8 H16 M11 11 H16 M11 14 H16" stroke="#21a366" stroke-width="1.6"/><rect x="11" y="13.5" width="5" height="2" fill="#222"/><rect x="0" y="4" width="10.5" height="10.5" fill="#107c41"/><path d="M2.5 6.5 L8 12 M8 6.5 L2.5 12" stroke="#fff" stroke-width="1.8"/></svg>
<div class="t" id="k43794cec70" style="left:267.54px;top:524.0px;font-size:15px;line-height:16px;color:#000;transform:scaleX(0.9647);transform-origin:left center;"><span dir="rtl">تاریخچه سفارشات</span></div>
<div class="t" style="left:567px;top:523.5px;font-size:15px;line-height:16px;color:#6d6d6d;transform:scaleX(0.9084);transform-origin:left center;direction:ltr;unicode-bidi:isolate;"><span style="unicode-bidi:isolate">۱۴۰۴/۰۹/۱۰</span> <span style="unicode-bidi:isolate" dir="rtl">ق.ظ</span> <span style="unicode-bidi:isolate">۱۱:۴۸</span></div>
<div class="t" id="kd78e2bfab8" style="left:746.31px;top:524.0px;font-size:15px;line-height:16px;color:#6d6d6d;transform:scaleX(0.9876);transform-origin:left center;">Microsoft Excel W...</div>
<div class="t" id="k1c02d0b22a" style="right:939.57px;top:524.0px;font-size:15px;line-height:16px;color:#6d6d6d;transform:scaleX(0.9323);transform-origin:right center;">7 KB</div>
<svg class="s" style="left:246px;top:548.5px" width="12" height="17" viewBox="0 0 12 17"><path d="M3.5 0 H12 V14.5 H3.5 Z" fill="#eec14f"/><path d="M4 0.5 H11.5 V14 H4 Z" fill="#f7d36c"/><path d="M0 2 L7 3.2 V17 L0 15.6 Z" fill="#fde49a"/><path d="M7 3.2 V17" stroke="#f0c85c" stroke-width=".8"/></svg>
<div class="t" id="kcc30c2717b" style="left:267.5px;top:551.0px;font-size:15px;line-height:16px;color:#000;transform:scaleX(1.0000);transform-origin:left center;">Eitaa Desktop</div>
<div class="t" style="left:567px;top:550.5px;font-size:15px;line-height:16px;color:#6d6d6d;transform:scaleX(0.9084);transform-origin:left center;direction:ltr;unicode-bidi:isolate;"><span style="unicode-bidi:isolate">۱۴۰۴/۰۹/۲۲</span> <span style="unicode-bidi:isolate" dir="rtl">ق.ظ</span> <span style="unicode-bidi:isolate">۱۰:۱۶</span></div>
<div class="t" id="k06d851525f" style="left:746.23px;top:551.0px;font-size:15px;line-height:16px;color:#6d6d6d;transform:scaleX(1.0710);transform-origin:left center;">File folder</div>
<svg class="s" style="left:246px;top:575.5px" width="12" height="17" viewBox="0 0 12 17"><path d="M3.5 0 H12 V14.5 H3.5 Z" fill="#eec14f"/><path d="M4 0.5 H11.5 V14 H4 Z" fill="#f7d36c"/><path d="M0 2 L7 3.2 V17 L0 15.6 Z" fill="#fde49a"/><path d="M7 3.2 V17" stroke="#f0c85c" stroke-width=".8"/></svg>
<div class="t" id="k89977d3f85" style="left:267.5px;top:578.0px;font-size:15px;line-height:16px;color:#000;transform:scaleX(1.0014);transform-origin:left center;">Documents</div>
<div class="t" style="left:567px;top:577.5px;font-size:15px;line-height:16px;color:#6d6d6d;transform:scaleX(0.9084);transform-origin:left center;direction:ltr;unicode-bidi:isolate;"><span style="unicode-bidi:isolate">۱۴۰۴/۰۹/۱۴</span> <span style="unicode-bidi:isolate" dir="rtl">ب.ظ</span> <span style="unicode-bidi:isolate">۰۱:۳۳</span></div>
<div class="t" id="k3ccd2c47f1" style="left:746.23px;top:578.0px;font-size:15px;line-height:16px;color:#6d6d6d;transform:scaleX(1.0710);transform-origin:left center;">File folder</div>
<svg class="s" style="left:229px;top:613px" width="11" height="6" viewBox="0 0 11 6"><path d="M0.5 0.5 L5.5 5.2 L10.5 0.5" fill="none" stroke="#6b7fa0" stroke-width="1.1"/></svg>
<div class="t" id="k049ba70715" style="left:246.6px;top:608.5px;font-size:15px;line-height:16px;color:#24408c;transform:scaleX(1.0589);transform-origin:left center;">A long time ago (59)</div>
<div class="r" style="left:393px;top:617px;width:1497px;height:1px;background:#e2e2e2;"></div>
<div style="position:absolute;left:0;top:0;width:1920px;height:1001px;overflow:hidden">
<svg class="s" style="left:243.5px;top:635px" width="20" height="20" viewBox="0 0 20 20"><path d="M3 5 L10 3.5 L17 5 V16.5 L10 19.5 L3 16.5 Z" fill="#b8b8c0"/><path d="M3 5 L10 7 V19.5 L3 16.5 Z" fill="#e4e4ea"/><path d="M10 7 L17 5 V16.5 L10 19.5 Z" fill="#a8a8b0"/><path d="M1.5 3 L10 1 L18.5 3 L10 5.5 Z" fill="#6a3ab8"/><path d="M3 5 L10 7 L17 5 L17 6.5 L10 8.5 L3 6.5 Z" fill="#9a6ae0"/><path d="M4.5 10 L8.5 11 M4.5 13 L8.5 14" stroke="#8a60d0" stroke-width="1.4"/><circle cx="14.5" cy="15" r="4.5" fill="#6a2ab8"/><path d="M14.5 12 V17" stroke="#fff" stroke-width="1.6"/></svg>
<div class="t" id="k8c220963ae" style="left:268.5px;top:640.0px;font-size:15px;line-height:16px;color:#000;transform:scaleX(0.9930);transform-origin:left center;">setup (1)</div>
<div class="t" style="left:567px;top:639.5px;font-size:15px;line-height:16px;color:#6d6d6d;transform:scaleX(0.9084);transform-origin:left center;direction:ltr;unicode-bidi:isolate;"><span style="unicode-bidi:isolate">۱۴۰۴/۰۹/۰۱</span> <span style="unicode-bidi:isolate" dir="rtl">ق.ظ</span> <span style="unicode-bidi:isolate">۱۰:۵۱</span></div>
<div class="t" id="ka60fa4ad1e" style="left:747.3px;top:640.0px;font-size:15px;line-height:16px;color:#6d6d6d;transform:scaleX(1.0704);transform-origin:left center;">Application</div>
<div class="t" id="k3819d4ebc7" style="right:939.54px;top:640.0px;font-size:15px;line-height:16px;color:#6d6d6d;transform:scaleX(0.9636);transform-origin:right center;">15,328 KB</div>
<svg class="s" style="left:243.5px;top:662px" width="20" height="20" viewBox="0 0 20 20"><path d="M3 5 L10 3.5 L17 5 V16.5 L10 19.5 L3 16.5 Z" fill="#b8b8c0"/><path d="M3 5 L10 7 V19.5 L3 16.5 Z" fill="#e4e4ea"/><path d="M10 7 L17 5 V16.5 L10 19.5 Z" fill="#a8a8b0"/><path d="M1.5 3 L10 1 L18.5 3 L10 5.5 Z" fill="#6a3ab8"/><path d="M3 5 L10 7 L17 5 L17 6.5 L10 8.5 L3 6.5 Z" fill="#9a6ae0"/><path d="M4.5 10 L8.5 11 M4.5 13 L8.5 14" stroke="#8a60d0" stroke-width="1.4"/><circle cx="14.5" cy="15" r="4.5" fill="#6a2ab8"/><path d="M14.5 12 V17" stroke="#fff" stroke-width="1.6"/></svg>
<div class="t" id="k727261e722" style="left:268.5px;top:667.0px;font-size:15px;line-height:16px;color:#000;transform:scaleX(0.9611);transform-origin:left center;">setup</div>
<div class="t" style="left:567px;top:666.5px;font-size:15px;line-height:16px;color:#6d6d6d;transform:scaleX(0.9084);transform-origin:left center;direction:ltr;unicode-bidi:isolate;"><span style="unicode-bidi:isolate">۱۴۰۴/۰۹/۰۱</span> <span style="unicode-bidi:isolate" dir="rtl">ق.ظ</span> <span style="unicode-bidi:isolate">۱۰:۴۷</span></div>
<div class="t" id="k54fa4fd2af" style="left:747.3px;top:667.0px;font-size:15px;line-height:16px;color:#6d6d6d;transform:scaleX(1.0704);transform-origin:left center;">Application</div>
<div class="t" id="k39ca86217b" style="right:939.54px;top:667.0px;font-size:15px;line-height:16px;color:#6d6d6d;transform:scaleX(0.9636);transform-origin:right center;">15,328 KB</div>
<svg class="s" style="left:245px;top:689px" width="16" height="20" viewBox="0 0 16 20"><path d="M0.5 0.5 H10.5 L15.5 5.5 V19.5 H0.5 Z" fill="#fff" stroke="#7a6a8a"/><path d="M10.5 0.5 L15.5 5.5 V0.5 Z" fill="#5a2a7a"/><path d="M10 6.5 Q6 4 4.5 8 Q4 11.5 8 11.5 Q10.5 11 10.5 8.5 H7.5" fill="none" stroke="#6a2a8a" stroke-width="1.8"/><text x="8" y="17.5" font-size="5" fill="#5a3a6a" text-anchor="middle" font-family="Liberation Sans">PDF</text></svg>
<div class="t" id="k39a042a172" style="left:267.52px;top:694.0px;font-size:15px;line-height:16px;color:#000;transform:scaleX(0.9767);transform-origin:left center;">Screenshot (33)</div>
<div class="t" style="left:567px;top:693.5px;font-size:15px;line-height:16px;color:#6d6d6d;transform:scaleX(0.9084);transform-origin:left center;direction:ltr;unicode-bidi:isolate;"><span style="unicode-bidi:isolate">۱۴۰۴/۰۷/۳۰</span> <span style="unicode-bidi:isolate" dir="rtl">ق.ظ</span> <span style="unicode-bidi:isolate">۰۸:۰۶</span></div>
<div class="t" id="k0959e01bd3" style="left:746.33px;top:694.0px;font-size:15px;line-height:16px;color:#6d6d6d;transform:scaleX(0.9744);transform-origin:left center;">Foxit PDF Editor D...</div>
<div class="t" id="k42eeef018d" style="right:939.53px;top:694.0px;font-size:15px;line-height:16px;color:#6d6d6d;transform:scaleX(0.9652);transform-origin:right center;">106 KB</div>
<svg class="s" style="left:245px;top:717px" width="16" height="20" viewBox="0 0 16 20"><path d="M0.5 0.5 H11 L15.5 5 V19.5 H0.5 Z" fill="#fff" stroke="#6e6e6e"/><path d="M11 0.5 V5 H15.5" fill="none" stroke="#6e6e6e"/><rect x="4" y="7" width="8.5" height="8" fill="#1f6fc8"/><path d="M4 15 L8 10.5 L12.5 15 Z" fill="#5cc8f5"/><circle cx="10.5" cy="8.8" r="1" fill="#d8f0ff"/></svg>
<div class="t" id="k0e75342db4" style="left:268.5px;top:721.0px;font-size:15px;line-height:16px;color:#000;transform:scaleX(0.9919);transform-origin:left center;">slazzer-preview-5628n</div>
<div class="t" style="left:567px;top:720.5px;font-size:15px;line-height:16px;color:#6d6d6d;transform:scaleX(0.9084);transform-origin:left center;direction:ltr;unicode-bidi:isolate;"><span style="unicode-bidi:isolate">۱۴۰۴/۰۷/۳۰</span> <span style="unicode-bidi:isolate" dir="rtl">ق.ظ</span> <span style="unicode-bidi:isolate">۰۶:۱۸</span></div>
<div class="t" id="k593397d9d9" style="left:746.36px;top:721.0px;font-size:15px;line-height:16px;color:#6d6d6d;transform:scaleX(0.9356);transform-origin:left center;">PNG File</div>
<div class="t" id="k12a58cfde0" style="right:939.56px;top:721.0px;font-size:15px;line-height:16px;color:#6d6d6d;transform:scaleX(0.9447);transform-origin:right center;">333 KB</div>
<svg class="s" style="left:245px;top:744px" width="16" height="20" viewBox="0 0 16 20"><path d="M0.5 0.5 H11 L15.5 5 V19.5 H0.5 Z" fill="#fff" stroke="#6e6e6e"/><path d="M11 0.5 V5 H15.5" fill="none" stroke="#6e6e6e"/><rect x="4" y="7" width="8.5" height="8" fill="#1f6fc8"/><path d="M4 15 L8 10.5 L12.5 15 Z" fill="#5cc8f5"/><circle cx="10.5" cy="8.8" r="1" fill="#d8f0ff"/></svg>
<div class="t" id="kf978860764" style="left:268.5px;top:748.0px;font-size:15px;line-height:16px;color:#000;transform:scaleX(1.0014);transform-origin:left center;">slazzer-preview-tunlv</div>
<div class="t" style="left:567px;top:747.5px;font-size:15px;line-height:16px;color:#6d6d6d;transform:scaleX(0.9084);transform-origin:left center;direction:ltr;unicode-bidi:isolate;"><span style="unicode-bidi:isolate">۱۴۰۴/۰۷/۳۰</span> <span style="unicode-bidi:isolate" dir="rtl">ق.ظ</span> <span style="unicode-bidi:isolate">۰۶:۱۸</span></div>
<div class="t" id="k5976ad4515" style="left:746.36px;top:748.0px;font-size:15px;line-height:16px;color:#6d6d6d;transform:scaleX(0.9356);transform-origin:left center;">PNG File</div>
<div class="t" id="k094413fd0e" style="right:939.56px;top:748.0px;font-size:15px;line-height:16px;color:#6d6d6d;transform:scaleX(0.9447);transform-origin:right center;">275 KB</div>
<svg class="s" style="left:245px;top:771px" width="16" height="20" viewBox="0 0 16 20"><path d="M0.5 0.5 H11 L15.5 5 V19.5 H0.5 Z" fill="#fff" stroke="#6e6e6e"/><path d="M11 0.5 V5 H15.5" fill="none" stroke="#6e6e6e"/><rect x="4" y="7" width="8.5" height="8" fill="#1f6fc8"/><path d="M4 15 L8 10.5 L12.5 15 Z" fill="#5cc8f5"/><circle cx="10.5" cy="8.8" r="1" fill="#d8f0ff"/></svg>
<div class="t" id="k9927855dc2" style="left:268.5px;top:775.0px;font-size:15px;line-height:16px;color:#000;transform:scaleX(0.9846);transform-origin:left center;">slazzer-preview-avveo</div>
<div class="t" style="left:567px;top:774.5px;font-size:15px;line-height:16px;color:#6d6d6d;transform:scaleX(0.9084);transform-origin:left center;direction:ltr;unicode-bidi:isolate;"><span style="unicode-bidi:isolate">۱۴۰۴/۰۷/۳۰</span> <span style="unicode-bidi:isolate" dir="rtl">ق.ظ</span> <span style="unicode-bidi:isolate">۰۶:۱۷</span></div>
<div class="t" id="k3bdca524fd" style="left:746.36px;top:775.0px;font-size:15px;line-height:16px;color:#6d6d6d;transform:scaleX(0.9356);transform-origin:left center;">PNG File</div>
<div class="t" id="k8670a6ee79" style="right:939.53px;top:775.0px;font-size:15px;line-height:16px;color:#6d6d6d;transform:scaleX(0.9652);transform-origin:right center;">178 KB</div>
<svg class="s" style="left:245px;top:798px" width="16" height="20" viewBox="0 0 16 20"><path d="M0.5 0.5 H11 L15.5 5 V19.5 H0.5 Z" fill="#fff" stroke="#6e6e6e"/><path d="M11 0.5 V5 H15.5" fill="none" stroke="#6e6e6e"/><rect x="4" y="7" width="8.5" height="8" fill="#1f6fc8"/><path d="M4 15 L8 10.5 L12.5 15 Z" fill="#5cc8f5"/><circle cx="10.5" cy="8.8" r="1" fill="#d8f0ff"/></svg>
<div class="t" id="ka31116d276" style="left:268.5px;top:802.0px;font-size:15px;line-height:16px;color:#000;transform:scaleX(1.0290);transform-origin:left center;">slazzer-edit-image(3)</div>
<div class="t" style="left:567px;top:801.5px;font-size:15px;line-height:16px;color:#6d6d6d;transform:scaleX(0.9084);transform-origin:left center;direction:ltr;unicode-bidi:isolate;"><span style="unicode-bidi:isolate">۱۴۰۴/۰۷/۳۰</span> <span style="unicode-bidi:isolate" dir="rtl">ق.ظ</span> <span style="unicode-bidi:isolate">۰۶:۱۷</span></div>
<div class="t" id="k3eb2a6703d" style="left:746.36px;top:802.0px;font-size:15px;line-height:16px;color:#6d6d6d;transform:scaleX(0.9356);transform-origin:left center;">PNG File</div>
<div class="t" id="k3ddcfd5964" style="right:939.53px;top:802.0px;font-size:15px;line-height:16px;color:#6d6d6d;transform:scaleX(0.9652);transform-origin:right center;">173 KB</div>
<svg class="s" style="left:245px;top:825px" width="16" height="20" viewBox="0 0 16 20"><path d="M0.5 0.5 H11 L15.5 5 V19.5 H0.5 Z" fill="#fff" stroke="#6e6e6e"/><path d="M11 0.5 V5 H15.5" fill="none" stroke="#6e6e6e"/><rect x="4" y="7" width="8.5" height="8" fill="#1f6fc8"/><path d="M4 15 L8 10.5 L12.5 15 Z" fill="#5cc8f5"/><circle cx="10.5" cy="8.8" r="1" fill="#d8f0ff"/></svg>
<div class="t" id="kf1cefb48ee" style="left:268.5px;top:829.0px;font-size:15px;line-height:16px;color:#000;transform:scaleX(1.0283);transform-origin:left center;">slazzer-edit-image(2)</div>
<div class="t" style="left:567px;top:828.5px;font-size:15px;line-height:16px;color:#6d6d6d;transform:scaleX(0.9084);transform-origin:left center;direction:ltr;unicode-bidi:isolate;"><span style="unicode-bidi:isolate">۱۴۰۴/۰۷/۳۰</span> <span style="unicode-bidi:isolate" dir="rtl">ق.ظ</span> <span style="unicode-bidi:isolate">۰۶:۱۶</span></div>
<div class="t" id="k7ea3f029b3" style="left:746.36px;top:829.0px;font-size:15px;line-height:16px;color:#6d6d6d;transform:scaleX(0.9356);transform-origin:left center;">PNG File</div>
<div class="t" id="k79b592e8cd" style="right:939.53px;top:829.0px;font-size:15px;line-height:16px;color:#6d6d6d;transform:scaleX(0.9652);transform-origin:right center;">173 KB</div>
<svg class="s" style="left:245px;top:852px" width="16" height="20" viewBox="0 0 16 20"><path d="M0.5 0.5 H11 L15.5 5 V19.5 H0.5 Z" fill="#fff" stroke="#6e6e6e"/><path d="M11 0.5 V5 H15.5" fill="none" stroke="#6e6e6e"/><rect x="4" y="7" width="8.5" height="8" fill="#1f6fc8"/><path d="M4 15 L8 10.5 L12.5 15 Z" fill="#5cc8f5"/><circle cx="10.5" cy="8.8" r="1" fill="#d8f0ff"/></svg>
<div class="t" id="kc3a9892637" style="left:268.5px;top:856.0px;font-size:15px;line-height:16px;color:#000;transform:scaleX(0.9946);transform-origin:left center;">slazzer-preview-mbjs0</div>
<div class="t" style="left:567px;top:855.5px;font-size:15px;line-height:16px;color:#6d6d6d;transform:scaleX(0.9084);transform-origin:left center;direction:ltr;unicode-bidi:isolate;"><span style="unicode-bidi:isolate">۱۴۰۴/۰۷/۳۰</span> <span style="unicode-bidi:isolate" dir="rtl">ق.ظ</span> <span style="unicode-bidi:isolate">۰۱:۳۵</span></div>
<div class="t" id="k97c577f44b" style="left:746.36px;top:856.0px;font-size:15px;line-height:16px;color:#6d6d6d;transform:scaleX(0.9356);transform-origin:left center;">PNG File</div>
<div class="t" id="kcccd50471d" style="right:939.53px;top:856.0px;font-size:15px;line-height:16px;color:#6d6d6d;transform:scaleX(0.9652);transform-origin:right center;">191 KB</div>
<svg class="s" style="left:245px;top:879px" width="16" height="20" viewBox="0 0 16 20"><path d="M0.5 0.5 H11 L15.5 5 V19.5 H0.5 Z" fill="#fff" stroke="#6e6e6e"/><path d="M11 0.5 V5 H15.5" fill="none" stroke="#6e6e6e"/><rect x="4" y="7" width="8.5" height="8" fill="#1f6fc8"/><path d="M4 15 L8 10.5 L12.5 15 Z" fill="#5cc8f5"/><circle cx="10.5" cy="8.8" r="1" fill="#d8f0ff"/></svg>
<div class="t" id="kc4e48a2130" style="left:268.5px;top:883.0px;font-size:15px;line-height:16px;color:#000;transform:scaleX(1.0283);transform-origin:left center;">slazzer-edit-image(1)</div>
<div class="t" style="left:567px;top:882.5px;font-size:15px;line-height:16px;color:#6d6d6d;transform:scaleX(0.9084);transform-origin:left center;direction:ltr;unicode-bidi:isolate;"><span style="unicode-bidi:isolate">۱۴۰۴/۰۷/۳۰</span> <span style="unicode-bidi:isolate" dir="rtl">ق.ظ</span> <span style="unicode-bidi:isolate">۰۱:۳۴</span></div>
<div class="t" id="k68f9b61161" style="left:746.36px;top:883.0px;font-size:15px;line-height:16px;color:#6d6d6d;transform:scaleX(0.9356);transform-origin:left center;">PNG File</div>
<div class="t" id="ke965ed9480" style="right:939.53px;top:883.0px;font-size:15px;line-height:16px;color:#6d6d6d;transform:scaleX(0.9652);transform-origin:right center;">191 KB</div>
<svg class="s" style="left:245px;top:906px" width="16" height="20" viewBox="0 0 16 20"><path d="M0.5 0.5 H11 L15.5 5 V19.5 H0.5 Z" fill="#fff" stroke="#6e6e6e"/><path d="M11 0.5 V5 H15.5" fill="none" stroke="#6e6e6e"/><rect x="4" y="7" width="8.5" height="8" fill="#1f6fc8"/><path d="M4 15 L8 10.5 L12.5 15 Z" fill="#5cc8f5"/><circle cx="10.5" cy="8.8" r="1" fill="#d8f0ff"/></svg>
<div class="t" id="k151101610a" style="left:268.5px;top:910.0px;font-size:15px;line-height:16px;color:#000;transform:scaleX(1.0264);transform-origin:left center;">slazzer-edit-image</div>
<div class="t" style="left:567px;top:909.5px;font-size:15px;line-height:16px;color:#6d6d6d;transform:scaleX(0.9084);transform-origin:left center;direction:ltr;unicode-bidi:isolate;"><span style="unicode-bidi:isolate">۱۴۰۴/۰۷/۳۰</span> <span style="unicode-bidi:isolate" dir="rtl">ق.ظ</span> <span style="unicode-bidi:isolate">۰۱:۳۴</span></div>
<div class="t" id="k98d6efa889" style="left:746.36px;top:910.0px;font-size:15px;line-height:16px;color:#6d6d6d;transform:scaleX(0.9356);transform-origin:left center;">PNG File</div>
<div class="t" id="k961159206d" style="right:939.53px;top:910.0px;font-size:15px;line-height:16px;color:#6d6d6d;transform:scaleX(0.9652);transform-origin:right center;">191 KB</div>
<svg class="s" style="left:245px;top:933px" width="16" height="20" viewBox="0 0 16 20"><path d="M0.5 0.5 H11 L15.5 5 V19.5 H0.5 Z" fill="#fff" stroke="#6e6e6e"/><path d="M11 0.5 V5 H15.5" fill="none" stroke="#6e6e6e"/><rect x="4" y="7" width="8.5" height="8" fill="#1f6fc8"/><path d="M4 15 L8 10.5 L12.5 15 Z" fill="#5cc8f5"/><circle cx="10.5" cy="8.8" r="1" fill="#d8f0ff"/></svg>
<div class="t" id="k75094ffbf0" style="left:268.5px;top:937.0px;font-size:15px;line-height:16px;color:#000;transform:scaleX(0.8625);transform-origin:left center;">2</div>
<div class="t" style="left:567px;top:936.5px;font-size:15px;line-height:16px;color:#6d6d6d;transform:scaleX(0.9084);transform-origin:left center;direction:ltr;unicode-bidi:isolate;"><span style="unicode-bidi:isolate">۱۴۰۴/۰۷/۳۰</span> <span style="unicode-bidi:isolate" dir="rtl">ق.ظ</span> <span style="unicode-bidi:isolate">۰۱:۳۱</span></div>
<div class="t" id="kbeb2fbe382" style="left:746.36px;top:937.0px;font-size:15px;line-height:16px;color:#6d6d6d;transform:scaleX(0.9356);transform-origin:left center;">PNG File</div>
<div class="t" id="k63b3690da0" style="right:939.53px;top:937.0px;font-size:15px;line-height:16px;color:#6d6d6d;transform:scaleX(0.9652);transform-origin:right center;">191 KB</div>
<svg class="s" style="left:245px;top:960px" width="16" height="20" viewBox="0 0 16 20"><path d="M0.5 0.5 H11 L15.5 5 V19.5 H0.5 Z" fill="#fff" stroke="#6e6e6e"/><path d="M11 0.5 V5 H15.5" fill="none" stroke="#6e6e6e"/><rect x="4" y="7" width="8.5" height="8" fill="#1f6fc8"/><path d="M4 15 L8 10.5 L12.5 15 Z" fill="#5cc8f5"/><circle cx="10.5" cy="8.8" r="1" fill="#d8f0ff"/></svg>
<div class="t" id="k9590bf06b1" style="left:268.5px;top:964.0px;font-size:15px;line-height:16px;color:#000;transform:scaleX(0.9631);transform-origin:left center;">slazzer-preview-ass47</div>
<div class="t" style="left:567px;top:963.5px;font-size:15px;line-height:16px;color:#6d6d6d;transform:scaleX(0.9084);transform-origin:left center;direction:ltr;unicode-bidi:isolate;"><span style="unicode-bidi:isolate">۱۴۰۴/۰۷/۳۰</span> <span style="unicode-bidi:isolate" dir="rtl">ق.ظ</span> <span style="unicode-bidi:isolate">۰۱:۳۰</span></div>
<div class="t" id="k3e883f7e1d" style="left:746.36px;top:964.0px;font-size:15px;line-height:16px;color:#6d6d6d;transform:scaleX(0.9356);transform-origin:left center;">PNG File</div>
<div class="t" id="k96546ae4c8" style="right:939.53px;top:964.0px;font-size:15px;line-height:16px;color:#6d6d6d;transform:scaleX(0.9652);transform-origin:right center;">199 KB</div>
<svg class="s" style="left:245px;top:987px" width="16" height="20" viewBox="0 0 16 20"><path d="M0.5 0.5 H11 L15.5 5 V19.5 H0.5 Z" fill="#fff" stroke="#6e6e6e"/><path d="M11 0.5 V5 H15.5" fill="none" stroke="#6e6e6e"/><rect x="4" y="7" width="8.5" height="8" fill="#1f6fc8"/><path d="M4 15 L8 10.5 L12.5 15 Z" fill="#5cc8f5"/><circle cx="10.5" cy="8.8" r="1" fill="#d8f0ff"/></svg>
<div class="t" id="k30ac4511d1" style="left:267.44px;top:991.0px;font-size:15px;line-height:16px;color:#000;transform:scaleX(1.0630);transform-origin:left center;">Untitled-1_page-0001</div>
<div class="t" style="left:567px;top:990.5px;font-size:15px;line-height:16px;color:#6d6d6d;transform:scaleX(0.9084);transform-origin:left center;direction:ltr;unicode-bidi:isolate;"><span style="unicode-bidi:isolate">۱۴۰۴/۰۷/۲۹</span> <span style="unicode-bidi:isolate" dir="rtl">ب.ظ</span> <span style="unicode-bidi:isolate">۱۱:۲۹</span></div>
<div class="t" id="k47a82472de" style="left:744.57px;top:991.0px;font-size:15px;line-height:16px;color:#6d6d6d;transform:scaleX(0.9093);transform-origin:left center;">JPG File</div>
<div class="t" id="k9d586e265d" style="right:939.53px;top:991.0px;font-size:15px;line-height:16px;color:#6d6d6d;transform:scaleX(0.9741);transform-origin:right center;">5,977 KB</div>
</div>
<div class="r" style="left:1900px;top:215px;width:20px;height:786px;background:#f0f0f0;"></div>
<div class="r" style="left:1900px;top:236px;width:19px;height:267px;background:#cdcdcd;"></div>
<svg class="s" style="left:1904px;top:222px" width="11" height="7" viewBox="0 0 11 7"><path d="M0.8 6 L5.5 1.3 L10.2 6" fill="none" stroke="#555" stroke-width="1.6"/></svg>
<svg class="s" style="left:1904px;top:987px" width="11" height="7" viewBox="0 0 11 7"><path d="M0.8 1 L5.5 5.7 L10.2 1" fill="none" stroke="#555" stroke-width="1.6"/></svg>
<div class="t" id="k2f44595f66" style="left:17.3px;top:1008.0px;font-size:15px;line-height:16px;color:#283246;transform:scaleX(1.0073);transform-origin:left center;">68 items</div>
<div class="r" style="left:86px;top:1006px;width:1px;height:20px;background:#f4f4f4;"></div>
<div class="t" id="k39f9bfd356" style="left:98.29px;top:1008.0px;font-size:15px;line-height:16px;color:#283246;transform:scaleX(1.0092);transform-origin:left center;">1 item selected&nbsp;&nbsp;110 KB</div>
<div class="r" style="left:266px;top:1006px;width:1px;height:20px;background:#f4f4f4;"></div>
<div class="r" style="left:1859px;top:1001px;width:28px;height:29px;background:#cce8ff;border:1px solid #4a92cc;box-sizing:border-box;"></div>
<svg class="s" style="left:1865px;top:1008px" width="19" height="16" viewBox="0 0 19 16"><rect x="0.5" y="0.5" width="5" height="15" fill="#fff" stroke="#8a8a8a"/><rect x="2" y="2.5" width="2" height="2" fill="#2a5a5a"/><rect x="2" y="7" width="2" height="2" fill="#6a5a4a"/><rect x="2" y="11.5" width="2" height="2" fill="#7a2020"/><path d="M7 2.5 H11 M12.5 2.5 H17 M7 7.5 H11 M12.5 7.5 H17 M7 12.5 H11 M12.5 12.5 H17" stroke="#5a5a5a" stroke-width="1.3"/></svg>
<svg class="s" style="left:1892px;top:1008px" width="18" height="14" viewBox="0 0 18 14"><rect x="0.5" y="0.5" width="17" height="13" fill="#fff" stroke="#9a9a9a"/><rect x="2" y="2" width="14" height="10" fill="#4a86d0"/><path d="M2 5 Q9 3 16 6 V7 Q9 5 2 7 Z" fill="#e0eef8"/><path d="M2 12 V6.5 Q8 6 16 10 V12 Z" fill="#2a6a50"/><path d="M2 11 H16" stroke="#a0c8e8"/></svg>
<div class="r" style="left:0px;top:1030px;width:1920px;height:50px;background:linear-gradient(to right, #33312a 0px, #35322a 700px, #37372a 1000px, #38392a 1250px, #3b3b2e 1320px, #423e3a 1400px, #433f3a 1920px);"></div>
<div class="r" style="left:0px;top:1030px;width:60px;height:50px;background:#2b2820;"></div>
<svg class="s" style="left:20px;top:1045px" width="21" height="21" viewBox="0 0 21 21"><path d="M0 3 L9 1.8 V10 H0 Z M10 1.6 L21 0 V10 H10 Z M0 11 H9 V19.2 L0 18 Z M10 11 H21 V21 L10 19.4 Z" fill="#fff"/></svg>
<div class="r" style="left:60px;top:1030px;width:360px;height:50px;background:#f0f0f0;border-top:1px solid #c8c8c8;box-sizing:border-box;"></div>
<svg class="s" style="left:75px;top:1045px" width="21" height="21" viewBox="0 0 21 21"><circle cx="13.5" cy="7.5" r="6.5" fill="none" stroke="#111" stroke-width="1.5"/><path d="M8.8 12.2 L1 20" stroke="#111" stroke-width="1.6"/></svg>
<div class="t" id="k4b01ea32b1" style="left:111.0px;top:1047.5px;font-size:19px;line-height:16px;color:#222;transform:scaleX(0.9491);transform-origin:left center;">Type here to search</div>
<svg class="s" style="left:320px;top:1035px" width="100" height="40" viewBox="0 0 100 40"><path d="M40 5 C41 14 45 18 54 19 C45 20 41 24 40 33 C39 24 35 20 26 19 C35 18 39 14 40 5Z" fill="#f6c026"/><path d="M68 16.5 C68.6 21 70.5 23.4 75.5 24 C70.5 24.6 68.6 27 68 31.5 C67.4 27 65.5 24.6 60.5 24 C65.5 23.4 67.4 21 68 16.5Z" fill="#f6c026"/><path d="M16 25 C16.4 28 17.5 29.6 21 30 C17.5 30.4 16.4 32 16 35 C15.6 32 14.5 30.4 11 30 C14.5 29.6 15.6 28 16 25Z" fill="#1e90e0"/><circle cx="61" cy="7" r="2.5" fill="#e0603a"/><circle cx="83.5" cy="32" r="2.5" fill="#7ac143"/></svg>
<svg class="s" style="left:439px;top:1045px" width="22" height="19" viewBox="0 0 22 19"><rect x="1" y="4" width="14" height="11" fill="none" stroke="#fff" stroke-width="1.5"/><path d="M0 1 H16 M0 18 H16" stroke="#fff" stroke-width="1.5"/><path d="M20 1 V3 M20 6 V13 M20 16 V18" stroke="#fff" stroke-width="1.5"/></svg>
<svg class="s" style="left:498px;top:1039px" width="32" height="32" viewBox="0 0 32 32"><defs><linearGradient id="eg" x1="0" y1="0" x2="1" y2="0.6"><stop offset="0" stop-color="#1aa0e8"/><stop offset="1" stop-color="#5fdc6a"/></linearGradient></defs><circle cx="16" cy="16" r="15" fill="url(#eg)"/><path d="M1.5 19 Q3 31 17 31 Q25 31 29.5 24.5 Q22 28.5 15.5 26 Q8.5 23 10.5 16 Q12.5 10.5 19.5 12 Q13 7.5 7.5 10.5 Q1.5 13.5 1.5 19Z" fill="#0b5ab8"/><path d="M10.5 16 Q9.5 22 15.5 24.5 Q21 26 25 22.5 Q19 23 17.5 19 Q16.5 15 19.5 12 Q12.5 10.5 10.5 16Z" fill="#36b0f0"/></svg>
<div class="r" style="left:546px;top:1030px;width:61px;height:50px;background:#57544b;"></div>
<div class="r" style="left:546px;top:1077px;width:61px;height:3px;background:#eee7a6;"></div>
<svg class="s" style="left:561px;top:1042px" width="30" height="24" viewBox="0 0 30 24"><path d="M0 2 H11 L13 5 H30 V23 H0 Z" fill="#f3b62d"/><rect x="0" y="7" width="30" height="16" fill="#fcd34d"/><rect x="9" y="14" width="12" height="9" fill="#1a8ad8"/><rect x="12" y="17" width="6" height="6" fill="#fcd34d"/></svg>
<svg class="s" style="left:622px;top:1038px" width="31" height="33" viewBox="0 0 31 33"><path d="M10 6 V3 Q10 1 12 1 H19 Q21 1 21 3 V6" fill="none" stroke="#2ca5e0" stroke-width="2"/><rect x="0" y="6" width="31" height="26" rx="4" fill="#f4f6f8"/><rect x="9" y="12" width="6" height="6" fill="#f25022"/><rect x="16" y="12" width="6" height="6" fill="#7fba00"/><rect x="9" y="19" width="6" height="6" fill="#00a4ef"/><rect x="16" y="19" width="6" height="6" fill="#ffb900"/></svg>
<svg class="s" style="left:684px;top:1040px" width="31" height="30" viewBox="0 0 31 30"><path d="M6 10 L18 1 L31 10 V29 H6 Z" fill="#1a6fd0"/><path d="M6 10 L18 18 L31 10 V29 H6 Z" fill="#3ab0f5"/><rect x="0" y="13" width="13" height="13" rx="2" fill="#0f5bb5"/><circle cx="6.5" cy="19.5" r="3.5" fill="none" stroke="#fff" stroke-width="1.8"/></svg>
<svg class="s" style="left:746px;top:1038px" width="32" height="33" viewBox="0 0 32 33"><defs><radialGradient id="ffg" cx="0.6" cy="0.25" r="0.9"><stop offset="0" stop-color="#fff44f"/><stop offset="0.35" stop-color="#ffa436"/><stop offset="0.7" stop-color="#ff5634"/><stop offset="1" stop-color="#e31587"/></radialGradient></defs><path d="M16 32 C7 32 1.5 25 1.5 17.5 C1.5 12 4 8 6.5 6 C6 9 7 11 8.5 12 C9.5 8 12.5 5.5 15 4.5 C14 7 14.5 9 16 10 C20 10 24 12.5 24.5 17 C25 13 23.5 10 21.5 8 C22 4.5 21 2 19 0.5 C26 2.5 30.5 9 30.5 17.5 C30.5 25.5 24 32 16 32 Z" fill="url(#ffg)"/><circle cx="16" cy="18.5" r="6.8" fill="#6e38d8"/><path d="M9 17 C10 12 14 11 17 11.5 C13 12.5 11.5 15 12 18 Z" fill="#ff9a2a"/><path d="M9.2 19 C10 24 14 26 18 25.5 C13.5 27.5 8 25 7.5 19 Z" fill="#ff7a2a"/></svg>
<svg class="s" style="left:810px;top:1040px" width="29" height="29" viewBox="0 0 29 29"><path d="M8 0 L28 4 V17 L8 14 Z" fill="#4ab6f0"/><path d="M9 1.5 L27 5 V16 L9 13 Z" fill="#78cdfa"/><path d="M0 24 L10 20 L22 23 L12 28 Z" fill="#e8e8e8"/><path d="M14 15 V20" stroke="#aaa" stroke-width="2"/></svg>
<svg class="s" style="left:870px;top:1039px" width="32" height="32" viewBox="0 0 32 32"><circle cx="16" cy="16" r="15" fill="#ea4335"/><path d="M16 16 L3 23.5 A15 15 0 0 1 3 8.5 Z" fill="#34a853"/><path d="M16 16 L3 23.5 A15 15 0 0 0 16 31 A15 15 0 0 0 29 23.5 Z" fill="#34a853"/><path d="M16 16 L29 23.5 A15 15 0 0 0 29 8.5 Z" fill="#fbbc04"/><path d="M16 31 A15 15 0 0 0 29 23.5 L16 16 Z" fill="#fbbc04"/><circle cx="16" cy="16" r="7" fill="#fff"/><circle cx="16" cy="16" r="5.5" fill="#4285f4"/></svg>
<div class="r" style="left:861px;top:1077px;width:51px;height:3px;background:#eee7a6;"></div>
<svg class="s" style="left:932px;top:1040px" width="30" height="30" viewBox="0 0 30 30"><rect x="0" y="1" width="30" height="22" rx="2" fill="#1a90e0"/><rect x="6" y="6" width="18" height="24" rx="1" fill="#0a62c0"/><rect x="7" y="8" width="16" height="14" fill="#4cc2ff"/></svg>
<svg class="s" style="left:997px;top:1040px" width="25" height="30" viewBox="0 0 25 30"><rect x="0" y="0" width="25" height="30" rx="2" fill="#6a7c8e"/><rect x="3" y="3" width="19" height="6" fill="#5bd0f0"/><g fill="#e8eef3"><rect x="3" y="12" width="5" height="4"/><rect x="10" y="12" width="5" height="4"/><rect x="17" y="12" width="5" height="4"/><rect x="3" y="18" width="5" height="4"/><rect x="10" y="18" width="5" height="4"/><rect x="3" y="24" width="5" height="4"/><rect x="10" y="24" width="5" height="4"/></g><rect x="17" y="18" width="5" height="10" fill="#1a4a8a"/></svg>
<svg class="s" style="left:1056px;top:1040px" width="31" height="29" viewBox="0 0 31 29"><rect x="8" y="0" width="23" height="29" rx="2" fill="#2b7cd3"/><rect x="8" y="10" width="23" height="9" fill="#185abd"/><rect x="8" y="19" width="23" height="10" fill="#103f91"/><rect x="0" y="7" width="16" height="15" rx="2" fill="#185abd"/><text x="8" y="19" font-size="12" font-weight="bold" fill="#fff" text-anchor="middle" font-family="Liberation Sans">W</text></svg>
<svg class="s" style="left:1118px;top:1039px" width="32" height="32" viewBox="0 0 32 32"><path d="M3 18 Q0 6 14 4 Q28 3 27 14 Q26 19 21 18 Q17 17 17 21 Q18 27 12 27 Q5 27 3 18 Z" fill="#e8ecf0"/><circle cx="9" cy="12" r="2.3" fill="#e84040"/><circle cx="15" cy="9" r="2.3" fill="#f0b020"/><circle cx="8" cy="19" r="2.3" fill="#30a050"/><circle cx="20" cy="10" r="2" fill="#3080e0"/><path d="M29 1 L17 25" stroke="#d08a30" stroke-width="2.5"/></svg>
<div class="r" style="left:1109px;top:1077px;width:51px;height:3px;background:#eee7a6;"></div>
<svg class="s" style="left:1615px;top:1050px" width="16" height="10" viewBox="0 0 16 10"><path d="M1 9 L8 2 L15 9" fill="none" stroke="#fff" stroke-width="1.5"/></svg>
<svg class="s" style="left:1643px;top:1050px" width="21" height="12" viewBox="0 0 21 12"><rect x="0.8" y="0.8" width="17" height="10" fill="none" stroke="#fff" stroke-width="1.4"/><rect x="3" y="3" width="13" height="6" fill="#fff"/><rect x="18.5" y="3.5" width="2" height="5" fill="#fff"/></svg>
<svg class="s" style="left:1675px;top:1047px" width="18" height="17" viewBox="0 0 18 17"><path d="M1 10 Q8 2 16 3 M3 13 Q8 7 14 7 M6 15.5 Q9 11 12 11" fill="none" stroke="#fff" stroke-width="1.4"/><circle cx="15" cy="15" r="1.5" fill="#fff"/></svg>
<svg class="s" style="left:1702px;top:1045px" width="22" height="19" viewBox="0 0 22 19"><path d="M1 6.5 H5 L10 2 V17 L5 12.5 H1 Z" fill="none" stroke="#fff" stroke-width="1.3"/><path d="M13 7 Q15 9.5 13 12 M16 4.5 Q19.5 9.5 16 14.5 M19 2 Q23.5 9.5 19 17" fill="none" stroke="#ddd" stroke-width="1.1"/></svg>
<div class="t" id="k4496758aed" style="left:1744px;top:1038.0px;font-size:13px;line-height:16px;color:#fff;"><span dir="rtl">فا</span></div>
<div class="t" id="k03e0ec7002" style="left:1741.55px;top:1059.0px;font-size:14px;line-height:16px;color:#fff;transform:scaleX(0.9500);transform-origin:left center;">FA</div>
<div class="t" id="kc331701fc8" style="left:1779.0px;top:1036.5px;font-size:14px;line-height:16px;color:#fff;transform:scaleX(0.9855);transform-origin:left center;direction:ltr;"><span>03:28</span> <span dir="rtl">ب.ظ</span></div>
<div class="t" id="k90a31c995a" style="left:1780.1px;top:1059.0px;font-size:16px;line-height:16px;color:#fff;transform:scaleX(0.7987);transform-origin:left center;">۱۴۰۴/۱۰/۲۸</div>
<svg class="s" style="left:1869px;top:1044px" width="31" height="31" viewBox="0 0 31 31"><path d="M0 1 H21 V15 H9 L5 19 V15 H0 Z" fill="#fff"/><path d="M3 5 H18 M3 8 H18 M3 11 H18" stroke="#3b392f" stroke-width="1.2"/><circle cx="20" cy="20.5" r="9.5" fill="#3b392f" stroke="#999" stroke-width="1"/><text x="20" y="26" font-size="13" fill="#fff" text-anchor="middle" font-family="Liberation Sans">۱</text></svg>
<div class="r" style="left:1914px;top:1030px;width:1px;height:50px;background:#7a786f;"></div>
</body></html>
